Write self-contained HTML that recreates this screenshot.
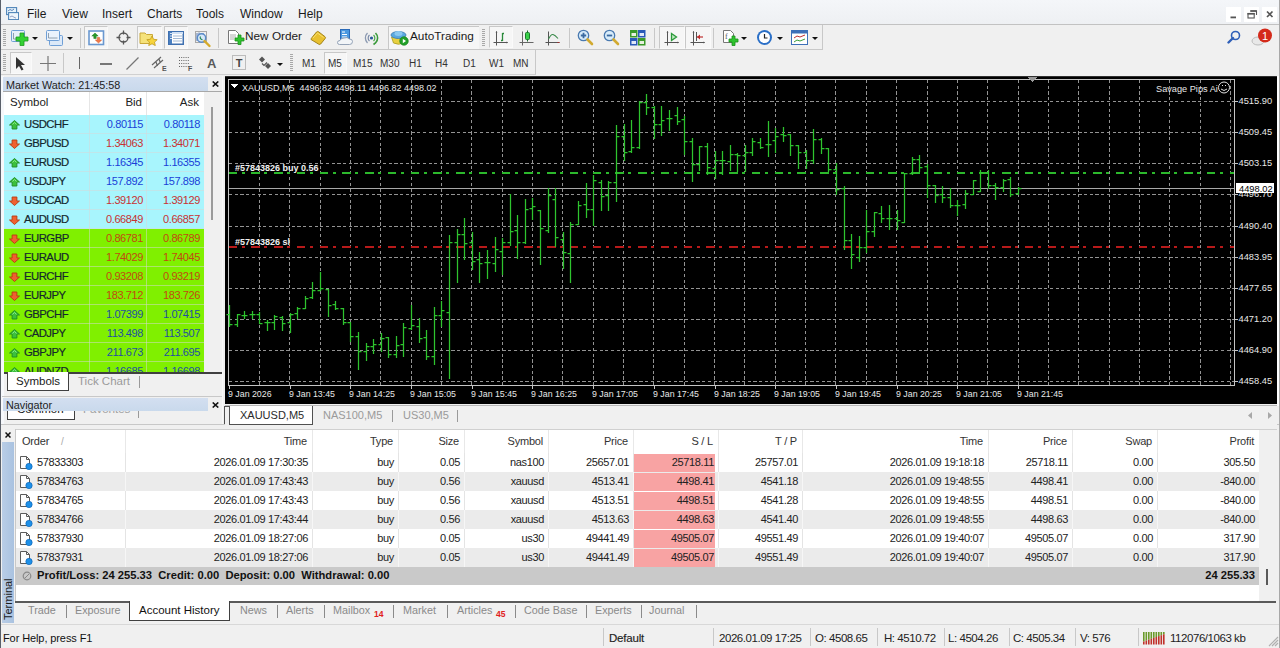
<!DOCTYPE html><html><head><meta charset="utf-8"><style>
*{margin:0;padding:0;box-sizing:border-box}
html,body{width:1280px;height:648px;overflow:hidden;background:#f0f0f0;font-family:"Liberation Sans", sans-serif;font-size:12px;color:#1e1e1e}
.a{position:absolute;white-space:nowrap;line-height:1}
.r{text-align:right}
</style></head><body>
<div class="a" style="left:0px;top:0px;width:1280px;height:24px;background:linear-gradient(#f4f6f9,#eef0f3);"></div><div class="a" style="left:0px;top:23.5px;width:1280px;height:1.2px;background:#c2c2c2;"></div><div class="a" style="left:0px;top:0px;width:1px;height:648px;background:#5a606a;"></div><svg class="a" style="left:6px;top:7px" width="13" height="13" viewBox="0 0 13 13">
<rect x="0.6" y="0.6" width="10" height="7" fill="#e8f4fc" stroke="#4f84b8" stroke-width="1.1"/>
<rect x="2.6" y="5.6" width="10" height="7" fill="#eef6fc" stroke="#4f84b8" stroke-width="1.1"/>
<path d="M2 4 l2 -1.5 l2 1 l2 -1.5" stroke="#3a6aa8" fill="none" stroke-width="0.8"/>
<path d="M4 10 l2 -1 l2 1.2 l2 1" stroke="#7a8ab8" fill="none" stroke-width="0.8"/>
</svg><div class="a" style="left:27px;top:8px;font-size:12px;color:#1a1a1a;">File</div><div class="a" style="left:62px;top:8px;font-size:12px;color:#1a1a1a;">View</div><div class="a" style="left:102px;top:8px;font-size:12px;color:#1a1a1a;">Insert</div><div class="a" style="left:147px;top:8px;font-size:12px;color:#1a1a1a;">Charts</div><div class="a" style="left:196px;top:8px;font-size:12px;color:#1a1a1a;">Tools</div><div class="a" style="left:240px;top:8px;font-size:12px;color:#1a1a1a;">Window</div><div class="a" style="left:298px;top:8px;font-size:12px;color:#1a1a1a;">Help</div><div class="a" style="left:1226px;top:7px;width:15px;height:14.5px;background:#ffffff;"></div><div class="a" style="left:1244px;top:7px;width:15px;height:14.5px;background:#ffffff;"></div><div class="a" style="left:1262px;top:7px;width:15px;height:14.5px;background:#ffffff;"></div><svg class="a" style="left:1226px;top:7px" width="54" height="15" viewBox="0 0 54 15">
<rect x="4.5" y="9.5" width="5.5" height="1.8" fill="#555"/>
<path d="M24.5 4 h6 v4" fill="none" stroke="#555" stroke-width="1.1"/><rect x="24.3" y="3.2" width="6.5" height="1.6" fill="#555"/>
<rect x="22" y="6.5" width="6.2" height="4.5" fill="#fff" stroke="#555" stroke-width="1.1"/><rect x="21.5" y="6" width="7" height="1.6" fill="#555"/>
<path d="M41 4.5 l5.5 5.5 M46.5 4.5 l-5.5 5.5" stroke="#555" stroke-width="1.7"/>
</svg><div class="a" style="left:1px;top:25px;width:1279px;height:24px;background:#f0f0f0;"></div><div class="a" style="left:1px;top:25px;width:822px;height:25px;border-right:1px solid #c8c8c8;border-bottom:1px solid #c8c8c8"></div><div class="a" style="left:1px;top:50px;width:535px;height:25px;border-right:1px solid #c8c8c8;border-bottom:1px solid #d0d0d0"></div><div class="a" style="left:3px;top:29px;width:3px;height:18px;background:repeating-linear-gradient(#a8a8a8 0 1px,transparent 1px 2px)"></div><svg class="a" style="left:10px;top:29px" width="20" height="17" viewBox="0 0 20 17">
<rect x="1.5" y="1.5" width="13" height="11" rx="1" fill="#e6f0fb" stroke="#6f9fd6"/>
<path d="M3.5 4 v6 h9" stroke="#7a8a9a" fill="none" stroke-width="0.8"/>
<path d="M10 4 h4 v4 h4 v4 h-4 v4.5 h-4 v-4.5 h-4 v-4 h4z" fill="#33d133" stroke="#1f9a1f" stroke-width="0.8"/>
</svg><svg class="a" style="left:32px;top:37px" width="6" height="3" viewBox="0 0 6 3"><path d="M0 0h6l-3 3z" fill="#111"/></svg><svg class="a" style="left:46px;top:29px" width="18" height="18" viewBox="0 0 18 18">
<rect x="3.5" y="6.5" width="13" height="10" rx="1" fill="#dce9f8" stroke="#6f9fd6"/>
<rect x="0.5" y="1.5" width="13" height="10" rx="1" fill="#eaf2fc" stroke="#6f9fd6"/>
<path d="M2.5 4 v5 h9" stroke="#7a8a9a" fill="none" stroke-width="0.8"/>
</svg><svg class="a" style="left:67px;top:37px" width="6" height="3" viewBox="0 0 6 3"><path d="M0 0h6l-3 3z" fill="#111"/></svg><div class="a" style="left:80px;top:28px;width:1px;height:20px;background:#c8c8c8;"></div><div class="a" style="left:84px;top:26px;width:24px;height:23px;border-top:1.5px solid #c8c8c8;border-left:1.5px solid #c8c8c8;border-right:1px solid #fafafa;border-bottom:1px solid #fafafa;background:#f6f6f6"></div><svg class="a" style="left:88px;top:30px" width="17" height="16" viewBox="0 0 17 16">
<rect x="1" y="1" width="14.5" height="13.5" fill="#fff" stroke="#6a98d0" stroke-width="1.6"/>
<path d="M7 3 l3.2 3 h-2 v2.5 h-2.4 v-2.5 h-2z" fill="#2a9a2a" stroke="#1f7a1f" stroke-width="0.5"/>
<path d="M10.5 13 l3.2 -3 h-2 v-2.5 h-2.4 v2.5 h-2z" fill="#f07a4a" stroke="#d05a2a" stroke-width="0.5"/>
</svg><svg class="a" style="left:116px;top:30px" width="15" height="15" viewBox="0 0 15 15">
<circle cx="7.5" cy="7.5" r="4.5" fill="none" stroke="#555" stroke-width="1.3"/>
<path d="M7.5 0.5v4M7.5 10.5v4M0.5 7.5h4M10.5 7.5h4" stroke="#555" stroke-width="1.3"/>
</svg><div class="a" style="left:137px;top:26px;width:25px;height:23px;border-top:1.5px solid #c8c8c8;border-left:1.5px solid #c8c8c8;border-right:1px solid #fafafa;border-bottom:1px solid #fafafa;background:#f6f6f6"></div><svg class="a" style="left:139px;top:30px" width="19" height="16" viewBox="0 0 19 16">
<path d="M1 3 h5 l1.5 1.5 h6 v9 h-12.5z" fill="#f5e27a" stroke="#c9a83a"/>
<path d="M13 6 l1.6 3.3 3.6 .4 -2.7 2.4 .8 3.5 -3.3 -1.8 -3.3 1.8 .8 -3.5 -2.7 -2.4 3.6 -.4z" fill="#f7d43b" stroke="#c09a20" stroke-width="0.8"/>
</svg><div class="a" style="left:164px;top:26px;width:24px;height:23px;border-top:1.5px solid #c8c8c8;border-left:1.5px solid #c8c8c8;border-right:1px solid #fafafa;border-bottom:1px solid #fafafa;background:#f6f6f6"></div><svg class="a" style="left:168px;top:31px" width="16" height="14" viewBox="0 0 16 14">
<rect x="0.75" y="0.75" width="14.5" height="12.5" fill="#fff" stroke="#3f70b0" stroke-width="1.5"/>
<rect x="1" y="1" width="3" height="12" fill="#4a7fc0"/>
<rect x="4" y="1" width="11" height="2" fill="#cfe0f4"/>
<path d="M5 5h9M5 7.5h9M5 10h9" stroke="#8aa6c8" stroke-width="0.8"/>
<path d="M2 2.5h2M2 5h2M2 7.5h2" stroke="#fff" stroke-width="0.8"/>
</svg><svg class="a" style="left:194px;top:30px" width="18" height="18" viewBox="0 0 18 18">
<rect x="1.5" y="1.5" width="11" height="11" fill="#f0f0f0" stroke="#a8a8a8"/>
<path d="M3 3v8M5 2.5v4M9 3v5" stroke="#3a5fa0" stroke-width="0.8"/>
<circle cx="7.5" cy="8" r="4.2" fill="#d6e8f8" stroke="#5a8ac8" stroke-width="1.4"/>
<path d="M6.5 6.5 a2 2 0 0 0 2 3" stroke="#2a8a5a" fill="none" stroke-width="1.2"/>
<path d="M10.5 11 l5 5" stroke="#d6aa2a" stroke-width="2.4" stroke-linecap="round"/>
</svg><div class="a" style="left:218px;top:28px;width:1px;height:20px;background:#c8c8c8;"></div><svg class="a" style="left:227px;top:29px" width="18" height="18" viewBox="0 0 18 18">
<path d="M1.5 1.5 h7 l3 3 v10 h-10z" fill="#fff" stroke="#777"/>
<path d="M3 6h6M3 8h6M3 10h4" stroke="#999" stroke-width="0.8"/>
<path d="M8 9 h3 v-3 h3 v3 h3 v3 h-3 v3.5 h-3 v-3.5 h-3z" fill="#2fc32f" stroke="#1a8f1a" stroke-width="0.8"/>
</svg><div class="a" style="left:245px;top:31px;font-size:11.8px;color:#1a1a1a;">New Order</div><svg class="a" style="left:310px;top:30px" width="17" height="16" viewBox="0 0 17 16">
<path d="M1 9.5 q0 -1 1 -2 l4.5 -5.5 q1 -1 2 -0.3 l6.5 5 q1 0.8 0.2 1.8 l-4.5 5.5 q-0.8 0.8 -1.8 0.3 z" fill="#e8c030" stroke="#9a7a10" stroke-width="0.9"/>
<path d="M3 8 l4.5 -5 l6 4.5" fill="none" stroke="#f8e070" stroke-width="1"/>
</svg><svg class="a" style="left:337px;top:29px" width="17" height="17" viewBox="0 0 17 17">
<rect x="3.5" y="0.5" width="9" height="10" fill="#4a98e0" stroke="#2a6ab8"/>
<path d="M5 3h3M5 5.5h5M5 8h5" stroke="#fff" stroke-width="1"/>
<path d="M2.5 15.5 q-2 0 -2 -2 q0 -2 2.5 -2 q1 -3 4.5 -2.5 q2.5 -1.5 5 1 q3 0 3 2.5 q0 3 -3 3 z" fill="#f2f5f8" stroke="#8a9ab0" stroke-width="0.9"/>
</svg><svg class="a" style="left:363px;top:30px" width="17" height="16" viewBox="0 0 17 16">
<path d="M4.5 3 a7 7 0 0 0 0 10" fill="none" stroke="#8a98b0" stroke-width="1.3"/>
<path d="M6.5 5 a4 4 0 0 0 0 6" fill="none" stroke="#7a8aa8" stroke-width="1.2"/>
<path d="M10.5 5 a4 4 0 0 1 0 6" fill="none" stroke="#4aa84a" stroke-width="1.2"/>
<path d="M12.5 3 a7 7 0 0 1 0 10 l-2 1.5" fill="none" stroke="#3a9a3a" stroke-width="1.6"/>
<circle cx="8.5" cy="8" r="1.6" fill="#2a5a9a"/>
</svg><div class="a" style="left:388px;top:26px;width:91px;height:23px;border-top:1.5px solid #c8c8c8;border-left:1.5px solid #c8c8c8;background:#f6f6f6"></div><svg class="a" style="left:390px;top:29px" width="19" height="17" viewBox="0 0 19 17">
<path d="M1.5 8 l2 6 q5 2.5 10 0 l2 -6z" fill="#e8d040" stroke="#a89a20" stroke-width="0.8"/>
<ellipse cx="8.5" cy="6" rx="7.5" ry="3.5" fill="#5aa8e0" stroke="#3a78b0" stroke-width="0.8"/>
<ellipse cx="8.5" cy="4.5" rx="4" ry="2.5" fill="#8ac8f0"/>
<circle cx="14" cy="12" r="4.3" fill="#22a02a" stroke="#10801a" stroke-width="0.6"/>
<path d="M12.8 9.8 l3.2 2.2 l-3.2 2.2z" fill="#fff"/>
</svg><div class="a" style="left:410px;top:31px;font-size:11.8px;color:#1a1a1a;">AutoTrading</div><div class="a" style="left:482px;top:29px;width:3px;height:18px;background:repeating-linear-gradient(#a8a8a8 0 1px,transparent 1px 2px)"></div><div class="a" style="left:489px;top:26px;width:24px;height:22px;border-top:1.5px solid #c8c8c8;border-left:1.5px solid #c8c8c8;border-right:1px solid #fafafa;border-bottom:1px solid #fafafa;background:#f6f6f6"></div><svg class="a" style="left:493px;top:30px" width="16" height="16" viewBox="0 0 16 16">
<path d="M3.5 1.5v14M0.5 12.5h14" stroke="#555" stroke-width="1"/><path d="M2.5 2.5 l1 -1.5 l1 1.5z M13.5 11.5 l1.5 1 l-1.5 1z" fill="#555"/>
<path d="M9.5 3v8M9.5 3.5h1.5M8 10.5h1.5" stroke="#2a8a3a" stroke-width="1.3"/>
</svg><svg class="a" style="left:519px;top:30px" width="16" height="16" viewBox="0 0 16 16">
<path d="M3.5 1.5v14M0.5 12.5h14" stroke="#666" stroke-width="1"/>
<path d="M8.5 0.5v11" stroke="#1a6a2a"/><rect x="6.5" y="2.5" width="4" height="7" rx="1" fill="#3ad04a" stroke="#1a7a2a"/>
</svg><svg class="a" style="left:545px;top:30px" width="16" height="16" viewBox="0 0 16 16">
<path d="M3.5 1.5v14M0.5 12.5h14" stroke="#555" stroke-width="1"/><path d="M12.5 12.5h2" stroke="#a03030"/>
<path d="M3.5 9 q2.5 -5 4.5 -4.5 q2 0.5 5 4" stroke="#3a8a4a" fill="none" stroke-width="1.1"/>
</svg><div class="a" style="left:569px;top:28px;width:1px;height:20px;background:#c8c8c8;"></div><svg class="a" style="left:577px;top:29px" width="17" height="17" viewBox="0 0 17 17">
<circle cx="6.5" cy="6.5" r="5.2" fill="#d8ecfa" stroke="#4a7ab0" stroke-width="1.3"/>
<path d="M3.8 6.5h5.4M6.5 3.8v5.4" stroke="#3a6aa0" stroke-width="1.8"/>
<path d="M10.5 10.5 l4.5 4.5" stroke="#d2aa30" stroke-width="2.6" stroke-linecap="round"/>
</svg><svg class="a" style="left:603px;top:29px" width="17" height="17" viewBox="0 0 17 17">
<circle cx="6.5" cy="6.5" r="5.2" fill="#d8ecfa" stroke="#4a7ab0" stroke-width="1.3"/>
<path d="M3.8 6.5h5.4" stroke="#3a6aa0" stroke-width="1.8"/>
<path d="M10.5 10.5 l4.5 4.5" stroke="#d2aa30" stroke-width="2.6" stroke-linecap="round"/>
</svg><svg class="a" style="left:630px;top:30px" width="16" height="16" viewBox="0 0 16 16">
<rect x="0" y="0" width="7.5" height="7.5" fill="#3a9a2a"/><rect x="8" y="0" width="7.5" height="7.5" fill="#2a5ab8"/>
<rect x="0" y="8" width="7.5" height="7.5" fill="#2a5ab8"/><rect x="8" y="8" width="7.5" height="7.5" fill="#3a9a2a"/>
<rect x="1.5" y="3" width="4.5" height="3" fill="#e8f0e0"/><rect x="9.5" y="3" width="4.5" height="3" fill="#e0e8f8"/>
<rect x="1.5" y="11" width="4.5" height="3" fill="#e0e8f8"/><rect x="9.5" y="11" width="4.5" height="3" fill="#e8f0e0"/>
</svg><div class="a" style="left:654px;top:28px;width:1px;height:20px;background:#c8c8c8;"></div><div class="a" style="left:659px;top:26px;width:26px;height:23px;border-top:1.5px solid #c8c8c8;border-left:1.5px solid #c8c8c8;border-right:1px solid #fafafa;border-bottom:1px solid #fafafa;background:#f6f6f6"></div><div class="a" style="left:685px;top:26px;width:26px;height:23px;border-top:1.5px solid #c8c8c8;border-left:1.5px solid #c8c8c8;border-right:1px solid #fafafa;border-bottom:1px solid #fafafa;background:#f6f6f6"></div><svg class="a" style="left:664px;top:30px" width="16" height="16" viewBox="0 0 16 16">
<path d="M3.5 1.5v14M0.5 12.5h14" stroke="#555" stroke-width="1"/><path d="M2.5 2.5 l1 -1.5 l1 1.5z M13.5 11.5 l1.5 1 l-1.5 1z" fill="#555"/>
<path d="M7.5 3.5 l5 3.5 l-5 3.5z" fill="#bfe8bf" stroke="#2a9a3a" stroke-width="1.3"/>
</svg><svg class="a" style="left:690px;top:30px" width="16" height="16" viewBox="0 0 16 16">
<path d="M3.5 1.5v14M0.5 12.5h14" stroke="#555" stroke-width="1"/><path d="M2.5 2.5 l1 -1.5 l1 1.5z M13.5 11.5 l1.5 1 l-1.5 1z" fill="#555"/>
<path d="M6.5 2v9" stroke="#555"/><path d="M7 7h6" stroke="#c03030" stroke-width="1.2"/><path d="M7 7 l3 -2.5 v5z" fill="#c03030"/>
</svg><div class="a" style="left:713px;top:28px;width:1px;height:20px;background:#c8c8c8;"></div><svg class="a" style="left:722px;top:29px" width="17" height="18" viewBox="0 0 17 18">
<path d="M1.5 1.5 h7 l3 3 v9 h-10z" fill="#fff" stroke="#777"/>
<text x="3" y="10" font-size="8" fill="#555" font-family="Liberation Serif">f</text>
<path d="M7 10 h3 v-3 h3 v3 h3 v3 h-3 v3.5 h-3 v-3.5 h-3z" fill="#2fc32f" stroke="#1a8f1a" stroke-width="0.8"/>
</svg><svg class="a" style="left:741px;top:37px" width="6" height="3" viewBox="0 0 6 3"><path d="M0 0h6l-3 3z" fill="#111"/></svg><svg class="a" style="left:756px;top:29px" width="17" height="17" viewBox="0 0 17 17">
<circle cx="8.5" cy="8.5" r="7.5" fill="#2a6fc7"/><circle cx="8.5" cy="8.5" r="5.5" fill="#fff"/>
<path d="M8.5 5v4h3" stroke="#222" fill="none" stroke-width="1.2"/>
</svg><svg class="a" style="left:777px;top:37px" width="6" height="3" viewBox="0 0 6 3"><path d="M0 0h6l-3 3z" fill="#111"/></svg><svg class="a" style="left:791px;top:30px" width="17" height="15" viewBox="0 0 17 15">
<rect x="0.5" y="0.5" width="16" height="14" fill="#fff" stroke="#3d70b8"/>
<rect x="0.5" y="0.5" width="16" height="3" fill="#3d70b8"/>
<path d="M3 8 l3 -2 l3 1 l5 -2" stroke="#c03030" fill="none"/><path d="M3 12 l3 -2 l3 1 l5 -2" stroke="#3aa03a" fill="none"/>
</svg><svg class="a" style="left:812px;top:37px" width="6" height="3" viewBox="0 0 6 3"><path d="M0 0h6l-3 3z" fill="#111"/></svg><svg class="a" style="left:1227px;top:30px" width="14" height="14" viewBox="0 0 14 14">
<circle cx="8.5" cy="5.5" r="4" fill="none" stroke="#2f5fb8" stroke-width="1.6"/>
<path d="M6 8 l-4.5 4.5" stroke="#2f5fb8" stroke-width="2.4" stroke-linecap="round"/>
</svg><svg class="a" style="left:1250px;top:27px" width="26" height="22" viewBox="0 0 26 22">
<ellipse cx="8" cy="14" rx="6" ry="4" fill="#e8e8e8" stroke="#bbb"/>
<circle cx="15" cy="8.5" r="7" fill="#d42a1a"/>
<text x="15" y="12.5" font-size="11" fill="#fff" text-anchor="middle" font-family="Liberation Sans">1</text>
</svg><div class="a" style="left:3px;top:54px;width:3px;height:18px;background:repeating-linear-gradient(#a8a8a8 0 1px,transparent 1px 2px)"></div><div class="a" style="left:10px;top:52px;width:22px;height:22px;border-top:1.5px solid #c8c8c8;border-left:1.5px solid #c8c8c8;border-right:1px solid #fafafa;border-bottom:1px solid #fafafa;background:#f6f6f6"></div><svg class="a" style="left:15px;top:56px" width="12" height="15" viewBox="0 0 12 15">
<path d="M1 1 v12 l3 -3 l2.5 4.5 l2 -1 l-2.5 -4.5 h4z" fill="#333"/>
</svg><svg class="a" style="left:40px;top:56px" width="16" height="15" viewBox="0 0 16 15">
<path d="M8 0v15M0 7.5h16" stroke="#777" stroke-width="1.2"/>
</svg><div class="a" style="left:63px;top:53px;width:1px;height:20px;background:#c8c8c8;"></div><div class="a" style="left:79px;top:57px;width:1px;height:12px;background:#666;"></div><div class="a" style="left:100px;top:63px;width:12px;height:1.5px;background:#777;"></div><svg class="a" style="left:126px;top:57px" width="13" height="13" viewBox="0 0 13 13"><path d="M0.5 12.5 l12 -12" stroke="#777" stroke-width="1.3"/></svg><svg class="a" style="left:151px;top:55px" width="18" height="17" viewBox="0 0 18 17">
<path d="M1 10 l9 -8 M3 13 l9 -8 M5 7 l1.5 4 M8 4 l1.5 4" stroke="#666" stroke-width="1.2" fill="none"/>
<text x="11" y="16" font-size="7" fill="#555" font-family="Liberation Sans" font-weight="bold">E</text>
</svg><svg class="a" style="left:178px;top:55px" width="16" height="17" viewBox="0 0 16 17">
<path d="M1 2.5h11M1 5.5h11M1 8.5h11M1 11.5h11" stroke="#666" stroke-width="1" stroke-dasharray="1 1.2"/>
<text x="10" y="16" font-size="7" fill="#555" font-family="Liberation Sans" font-weight="bold">F</text>
</svg><div class="a" style="left:207px;top:57px;font-size:13px;color:#5a5a5a;font-weight:bold">A</div><svg class="a" style="left:232px;top:55px" width="14" height="15" viewBox="0 0 14 15">
<rect x="0.5" y="0.5" width="13" height="14" fill="none" stroke="#888" stroke-dasharray="1 1"/>
<text x="7" y="12" font-size="11" fill="#444" text-anchor="middle" font-family="Liberation Sans" font-weight="bold">T</text>
</svg><svg class="a" style="left:258px;top:56px" width="14" height="14" viewBox="0 0 14 14">
<path d="M1 3.5 l3 -3 l3 3 l-3 3z" fill="#555"/><path d="M7 10 l3 -3 l3 3 l-3 3z" fill="#555"/>
<path d="M4 7.5 l2 2 l3 -3" stroke="#555" stroke-width="1.2" fill="none"/>
</svg><svg class="a" style="left:277px;top:63px" width="6" height="3" viewBox="0 0 6 3"><path d="M0 0h6l-3 3z" fill="#111"/></svg><div class="a" style="left:290px;top:54px;width:3px;height:18px;background:repeating-linear-gradient(#a8a8a8 0 1px,transparent 1px 2px)"></div><div class="a" style="left:302px;top:59px;font-size:10px;color:#333;">M1</div><div class="a" style="left:324px;top:52px;width:23px;height:22px;border-top:1.5px solid #c8c8c8;border-left:1.5px solid #c8c8c8;border-right:1px solid #fafafa;border-bottom:1px solid #fafafa;background:#f6f6f6"></div><div class="a" style="left:328px;top:59px;font-size:10px;color:#333;">M5</div><div class="a" style="left:353px;top:59px;font-size:10px;color:#333;">M15</div><div class="a" style="left:380px;top:59px;font-size:10px;color:#333;">M30</div><div class="a" style="left:409px;top:59px;font-size:10px;color:#333;">H1</div><div class="a" style="left:435px;top:59px;font-size:10px;color:#333;">H4</div><div class="a" style="left:463px;top:59px;font-size:10px;color:#333;">D1</div><div class="a" style="left:489px;top:59px;font-size:10px;color:#333;">W1</div><div class="a" style="left:513px;top:59px;font-size:10px;color:#333;">MN</div><div class="a" style="left:1px;top:76px;width:223px;height:323px;background:#f0f0f0;"></div><div class="a" style="left:1px;top:76px;width:3px;height:349px;background:#f6f8fb;"></div><div class="a" style="left:3px;top:77px;width:205px;height:14px;background:linear-gradient(#d3dff0,#c9d9ec);"></div><div class="a" style="left:6px;top:79.5px;font-size:10.8px;color:#222;">Market Watch: 21:45:58</div><svg class="a" style="left:211.5px;top:80.5px" width="7" height="6" viewBox="0 0 7 6"><path d="M0.7 0.5l5.6 5M6.3 0.5l-5.6 5" stroke="#111" stroke-width="1.6"/></svg><div class="a" style="left:3px;top:91px;width:219px;height:1px;background:#a8a8a8;"></div><div class="a" style="left:4px;top:92px;width:200px;height:281px;background:#ffffff;"></div><div class="a" style="left:10px;top:97px;font-size:11.5px;color:#222;">Symbol</div><div class="a r" style="left:90px;top:97px;width:52px;font-size:11.5px;color:#222">Bid</div><div class="a r" style="left:147px;top:97px;width:52px;font-size:11.5px;color:#222">Ask</div><div class="a" style="left:89px;top:92px;width:1px;height:23px;background:#e6e6e6;"></div><div class="a" style="left:146px;top:92px;width:1px;height:23px;background:#e6e6e6;"></div><div class="a" style="left:4px;top:115px;width:200px;height:257px;overflow:hidden"><div class="a" style="left:0;top:0px;width:200px;height:19px;background:#a8f5fd"></div><div class="a" style="left:0;top:18px;width:200px;height:1px;background:rgba(216,216,216,0.5)"></div><div class="a" style="left:85px;top:0px;width:1px;height:19px;background:rgba(216,216,216,0.5)"></div><div class="a" style="left:142px;top:0px;width:1px;height:19px;background:rgba(216,216,216,0.5)"></div><svg class="a" style="left:4.5px;top:5px" width="11" height="10" viewBox="0 0 11 10"><path d="M5.5 0.5 l5 4.5 h-2.6 v4 h-4.8 v-4 h-2.6z" fill="#3cc03c" stroke="#1f8a22" stroke-width="0.9" stroke-linejoin="round"/><path d="M3.5 4.5 l2 -2 l2 2" stroke="#9af09a" fill="none" stroke-width="0.8"/></svg><div class="a" style="left:20px;top:4px;font-size:11.3px;letter-spacing:-0.5px;color:#14282e;-webkit-text-stroke:0.2px #14282e">USDCHF</div><div class="a r" style="left:86px;top:4px;width:53px;font-size:11px;letter-spacing:-0.4px;color:#1a3fd8">0.80115</div><div class="a r" style="left:143px;top:4px;width:53px;font-size:11px;letter-spacing:-0.4px;color:#1a3fd8">0.80118</div><div class="a" style="left:0;top:19px;width:200px;height:19px;background:#a8f5fd"></div><div class="a" style="left:0;top:37px;width:200px;height:1px;background:rgba(216,216,216,0.5)"></div><div class="a" style="left:85px;top:19px;width:1px;height:19px;background:rgba(216,216,216,0.5)"></div><div class="a" style="left:142px;top:19px;width:1px;height:19px;background:rgba(216,216,216,0.5)"></div><svg class="a" style="left:4.5px;top:24px" width="11" height="10" viewBox="0 0 11 10"><path d="M5.5 9.5 l5 -4.5 h-2.6 v-4 h-4.8 v4 h-2.6z" fill="#f06030" stroke="#b83a10" stroke-width="0.9" stroke-linejoin="round"/></svg><div class="a" style="left:20px;top:23px;font-size:11.3px;letter-spacing:-0.5px;color:#14282e;-webkit-text-stroke:0.2px #14282e">GBPUSD</div><div class="a r" style="left:86px;top:23px;width:53px;font-size:11px;letter-spacing:-0.4px;color:#c83232">1.34063</div><div class="a r" style="left:143px;top:23px;width:53px;font-size:11px;letter-spacing:-0.4px;color:#c83232">1.34071</div><div class="a" style="left:0;top:38px;width:200px;height:19px;background:#a8f5fd"></div><div class="a" style="left:0;top:56px;width:200px;height:1px;background:rgba(216,216,216,0.5)"></div><div class="a" style="left:85px;top:38px;width:1px;height:19px;background:rgba(216,216,216,0.5)"></div><div class="a" style="left:142px;top:38px;width:1px;height:19px;background:rgba(216,216,216,0.5)"></div><svg class="a" style="left:4.5px;top:43px" width="11" height="10" viewBox="0 0 11 10"><path d="M5.5 0.5 l5 4.5 h-2.6 v4 h-4.8 v-4 h-2.6z" fill="#3cc03c" stroke="#1f8a22" stroke-width="0.9" stroke-linejoin="round"/><path d="M3.5 4.5 l2 -2 l2 2" stroke="#9af09a" fill="none" stroke-width="0.8"/></svg><div class="a" style="left:20px;top:42px;font-size:11.3px;letter-spacing:-0.5px;color:#14282e;-webkit-text-stroke:0.2px #14282e">EURUSD</div><div class="a r" style="left:86px;top:42px;width:53px;font-size:11px;letter-spacing:-0.4px;color:#1a3fd8">1.16345</div><div class="a r" style="left:143px;top:42px;width:53px;font-size:11px;letter-spacing:-0.4px;color:#1a3fd8">1.16355</div><div class="a" style="left:0;top:57px;width:200px;height:19px;background:#a8f5fd"></div><div class="a" style="left:0;top:75px;width:200px;height:1px;background:rgba(216,216,216,0.5)"></div><div class="a" style="left:85px;top:57px;width:1px;height:19px;background:rgba(216,216,216,0.5)"></div><div class="a" style="left:142px;top:57px;width:1px;height:19px;background:rgba(216,216,216,0.5)"></div><svg class="a" style="left:4.5px;top:62px" width="11" height="10" viewBox="0 0 11 10"><path d="M5.5 0.5 l5 4.5 h-2.6 v4 h-4.8 v-4 h-2.6z" fill="#3cc03c" stroke="#1f8a22" stroke-width="0.9" stroke-linejoin="round"/><path d="M3.5 4.5 l2 -2 l2 2" stroke="#9af09a" fill="none" stroke-width="0.8"/></svg><div class="a" style="left:20px;top:61px;font-size:11.3px;letter-spacing:-0.5px;color:#14282e;-webkit-text-stroke:0.2px #14282e">USDJPY</div><div class="a r" style="left:86px;top:61px;width:53px;font-size:11px;letter-spacing:-0.4px;color:#1a3fd8">157.892</div><div class="a r" style="left:143px;top:61px;width:53px;font-size:11px;letter-spacing:-0.4px;color:#1a3fd8">157.898</div><div class="a" style="left:0;top:76px;width:200px;height:19px;background:#a8f5fd"></div><div class="a" style="left:0;top:94px;width:200px;height:1px;background:rgba(216,216,216,0.5)"></div><div class="a" style="left:85px;top:76px;width:1px;height:19px;background:rgba(216,216,216,0.5)"></div><div class="a" style="left:142px;top:76px;width:1px;height:19px;background:rgba(216,216,216,0.5)"></div><svg class="a" style="left:4.5px;top:81px" width="11" height="10" viewBox="0 0 11 10"><path d="M5.5 9.5 l5 -4.5 h-2.6 v-4 h-4.8 v4 h-2.6z" fill="#f06030" stroke="#b83a10" stroke-width="0.9" stroke-linejoin="round"/></svg><div class="a" style="left:20px;top:80px;font-size:11.3px;letter-spacing:-0.5px;color:#14282e;-webkit-text-stroke:0.2px #14282e">USDCAD</div><div class="a r" style="left:86px;top:80px;width:53px;font-size:11px;letter-spacing:-0.4px;color:#c83232">1.39120</div><div class="a r" style="left:143px;top:80px;width:53px;font-size:11px;letter-spacing:-0.4px;color:#c83232">1.39129</div><div class="a" style="left:0;top:95px;width:200px;height:19px;background:#a8f5fd"></div><div class="a" style="left:0;top:113px;width:200px;height:1px;background:rgba(216,216,216,0.5)"></div><div class="a" style="left:85px;top:95px;width:1px;height:19px;background:rgba(216,216,216,0.5)"></div><div class="a" style="left:142px;top:95px;width:1px;height:19px;background:rgba(216,216,216,0.5)"></div><svg class="a" style="left:4.5px;top:100px" width="11" height="10" viewBox="0 0 11 10"><path d="M5.5 9.5 l5 -4.5 h-2.6 v-4 h-4.8 v4 h-2.6z" fill="#f06030" stroke="#b83a10" stroke-width="0.9" stroke-linejoin="round"/></svg><div class="a" style="left:20px;top:99px;font-size:11.3px;letter-spacing:-0.5px;color:#14282e;-webkit-text-stroke:0.2px #14282e">AUDUSD</div><div class="a r" style="left:86px;top:99px;width:53px;font-size:11px;letter-spacing:-0.4px;color:#c83232">0.66849</div><div class="a r" style="left:143px;top:99px;width:53px;font-size:11px;letter-spacing:-0.4px;color:#c83232">0.66857</div><div class="a" style="left:0;top:114px;width:200px;height:19px;background:#80f000"></div><div class="a" style="left:0;top:132px;width:200px;height:1px;background:rgba(216,216,216,0.5)"></div><div class="a" style="left:85px;top:114px;width:1px;height:19px;background:rgba(216,216,216,0.5)"></div><div class="a" style="left:142px;top:114px;width:1px;height:19px;background:rgba(216,216,216,0.5)"></div><svg class="a" style="left:4.5px;top:119px" width="11" height="10" viewBox="0 0 11 10"><path d="M5.5 9.5 l5 -4.5 h-2.6 v-4 h-4.8 v4 h-2.6z" fill="#f06030" stroke="#b83a10" stroke-width="0.9" stroke-linejoin="round"/></svg><div class="a" style="left:20px;top:118px;font-size:11.3px;letter-spacing:-0.5px;color:#14282e;-webkit-text-stroke:0.2px #14282e">EURGBP</div><div class="a r" style="left:86px;top:118px;width:53px;font-size:11px;letter-spacing:-0.4px;color:#c04a10">0.86781</div><div class="a r" style="left:143px;top:118px;width:53px;font-size:11px;letter-spacing:-0.4px;color:#c04a10">0.86789</div><div class="a" style="left:0;top:133px;width:200px;height:19px;background:#80f000"></div><div class="a" style="left:0;top:151px;width:200px;height:1px;background:rgba(216,216,216,0.5)"></div><div class="a" style="left:85px;top:133px;width:1px;height:19px;background:rgba(216,216,216,0.5)"></div><div class="a" style="left:142px;top:133px;width:1px;height:19px;background:rgba(216,216,216,0.5)"></div><svg class="a" style="left:4.5px;top:138px" width="11" height="10" viewBox="0 0 11 10"><path d="M5.5 9.5 l5 -4.5 h-2.6 v-4 h-4.8 v4 h-2.6z" fill="#f06030" stroke="#b83a10" stroke-width="0.9" stroke-linejoin="round"/></svg><div class="a" style="left:20px;top:137px;font-size:11.3px;letter-spacing:-0.5px;color:#14282e;-webkit-text-stroke:0.2px #14282e">EURAUD</div><div class="a r" style="left:86px;top:137px;width:53px;font-size:11px;letter-spacing:-0.4px;color:#c04a10">1.74029</div><div class="a r" style="left:143px;top:137px;width:53px;font-size:11px;letter-spacing:-0.4px;color:#c04a10">1.74045</div><div class="a" style="left:0;top:152px;width:200px;height:19px;background:#80f000"></div><div class="a" style="left:0;top:170px;width:200px;height:1px;background:rgba(216,216,216,0.5)"></div><div class="a" style="left:85px;top:152px;width:1px;height:19px;background:rgba(216,216,216,0.5)"></div><div class="a" style="left:142px;top:152px;width:1px;height:19px;background:rgba(216,216,216,0.5)"></div><svg class="a" style="left:4.5px;top:157px" width="11" height="10" viewBox="0 0 11 10"><path d="M5.5 9.5 l5 -4.5 h-2.6 v-4 h-4.8 v4 h-2.6z" fill="#f06030" stroke="#b83a10" stroke-width="0.9" stroke-linejoin="round"/></svg><div class="a" style="left:20px;top:156px;font-size:11.3px;letter-spacing:-0.5px;color:#14282e;-webkit-text-stroke:0.2px #14282e">EURCHF</div><div class="a r" style="left:86px;top:156px;width:53px;font-size:11px;letter-spacing:-0.4px;color:#c04a10">0.93208</div><div class="a r" style="left:143px;top:156px;width:53px;font-size:11px;letter-spacing:-0.4px;color:#c04a10">0.93219</div><div class="a" style="left:0;top:171px;width:200px;height:19px;background:#80f000"></div><div class="a" style="left:0;top:189px;width:200px;height:1px;background:rgba(216,216,216,0.5)"></div><div class="a" style="left:85px;top:171px;width:1px;height:19px;background:rgba(216,216,216,0.5)"></div><div class="a" style="left:142px;top:171px;width:1px;height:19px;background:rgba(216,216,216,0.5)"></div><svg class="a" style="left:4.5px;top:176px" width="11" height="10" viewBox="0 0 11 10"><path d="M5.5 9.5 l5 -4.5 h-2.6 v-4 h-4.8 v4 h-2.6z" fill="#f06030" stroke="#b83a10" stroke-width="0.9" stroke-linejoin="round"/></svg><div class="a" style="left:20px;top:175px;font-size:11.3px;letter-spacing:-0.5px;color:#14282e;-webkit-text-stroke:0.2px #14282e">EURJPY</div><div class="a r" style="left:86px;top:175px;width:53px;font-size:11px;letter-spacing:-0.4px;color:#c04a10">183.712</div><div class="a r" style="left:143px;top:175px;width:53px;font-size:11px;letter-spacing:-0.4px;color:#c04a10">183.726</div><div class="a" style="left:0;top:190px;width:200px;height:19px;background:#80f000"></div><div class="a" style="left:0;top:208px;width:200px;height:1px;background:rgba(216,216,216,0.5)"></div><div class="a" style="left:85px;top:190px;width:1px;height:19px;background:rgba(216,216,216,0.5)"></div><div class="a" style="left:142px;top:190px;width:1px;height:19px;background:rgba(216,216,216,0.5)"></div><svg class="a" style="left:4.5px;top:195px" width="11" height="10" viewBox="0 0 11 10"><path d="M5.5 0.5 l5 4.5 h-2.6 v4 h-4.8 v-4 h-2.6z" fill="#3cc03c" stroke="#1f8a22" stroke-width="0.9" stroke-linejoin="round"/><path d="M3.5 4.5 l2 -2 l2 2" stroke="#9af09a" fill="none" stroke-width="0.8"/></svg><div class="a" style="left:20px;top:194px;font-size:11.3px;letter-spacing:-0.5px;color:#14282e;-webkit-text-stroke:0.2px #14282e">GBPCHF</div><div class="a r" style="left:86px;top:194px;width:53px;font-size:11px;letter-spacing:-0.4px;color:#1f4fa0">1.07399</div><div class="a r" style="left:143px;top:194px;width:53px;font-size:11px;letter-spacing:-0.4px;color:#1f4fa0">1.07415</div><div class="a" style="left:0;top:209px;width:200px;height:19px;background:#80f000"></div><div class="a" style="left:0;top:227px;width:200px;height:1px;background:rgba(216,216,216,0.5)"></div><div class="a" style="left:85px;top:209px;width:1px;height:19px;background:rgba(216,216,216,0.5)"></div><div class="a" style="left:142px;top:209px;width:1px;height:19px;background:rgba(216,216,216,0.5)"></div><svg class="a" style="left:4.5px;top:214px" width="11" height="10" viewBox="0 0 11 10"><path d="M5.5 0.5 l5 4.5 h-2.6 v4 h-4.8 v-4 h-2.6z" fill="#3cc03c" stroke="#1f8a22" stroke-width="0.9" stroke-linejoin="round"/><path d="M3.5 4.5 l2 -2 l2 2" stroke="#9af09a" fill="none" stroke-width="0.8"/></svg><div class="a" style="left:20px;top:213px;font-size:11.3px;letter-spacing:-0.5px;color:#14282e;-webkit-text-stroke:0.2px #14282e">CADJPY</div><div class="a r" style="left:86px;top:213px;width:53px;font-size:11px;letter-spacing:-0.4px;color:#1f4fa0">113.498</div><div class="a r" style="left:143px;top:213px;width:53px;font-size:11px;letter-spacing:-0.4px;color:#1f4fa0">113.507</div><div class="a" style="left:0;top:228px;width:200px;height:19px;background:#80f000"></div><div class="a" style="left:0;top:246px;width:200px;height:1px;background:rgba(216,216,216,0.5)"></div><div class="a" style="left:85px;top:228px;width:1px;height:19px;background:rgba(216,216,216,0.5)"></div><div class="a" style="left:142px;top:228px;width:1px;height:19px;background:rgba(216,216,216,0.5)"></div><svg class="a" style="left:4.5px;top:233px" width="11" height="10" viewBox="0 0 11 10"><path d="M5.5 0.5 l5 4.5 h-2.6 v4 h-4.8 v-4 h-2.6z" fill="#3cc03c" stroke="#1f8a22" stroke-width="0.9" stroke-linejoin="round"/><path d="M3.5 4.5 l2 -2 l2 2" stroke="#9af09a" fill="none" stroke-width="0.8"/></svg><div class="a" style="left:20px;top:232px;font-size:11.3px;letter-spacing:-0.5px;color:#14282e;-webkit-text-stroke:0.2px #14282e">GBPJPY</div><div class="a r" style="left:86px;top:232px;width:53px;font-size:11px;letter-spacing:-0.4px;color:#1f4fa0">211.673</div><div class="a r" style="left:143px;top:232px;width:53px;font-size:11px;letter-spacing:-0.4px;color:#1f4fa0">211.695</div><div class="a" style="left:0;top:247px;width:200px;height:19px;background:#80f000"></div><div class="a" style="left:0;top:265px;width:200px;height:1px;background:rgba(216,216,216,0.5)"></div><div class="a" style="left:85px;top:247px;width:1px;height:19px;background:rgba(216,216,216,0.5)"></div><div class="a" style="left:142px;top:247px;width:1px;height:19px;background:rgba(216,216,216,0.5)"></div><svg class="a" style="left:4.5px;top:252px" width="11" height="10" viewBox="0 0 11 10"><path d="M5.5 0.5 l5 4.5 h-2.6 v4 h-4.8 v-4 h-2.6z" fill="#3cc03c" stroke="#1f8a22" stroke-width="0.9" stroke-linejoin="round"/><path d="M3.5 4.5 l2 -2 l2 2" stroke="#9af09a" fill="none" stroke-width="0.8"/></svg><div class="a" style="left:20px;top:251px;font-size:11.3px;letter-spacing:-0.5px;color:#14282e;-webkit-text-stroke:0.2px #14282e">AUDNZD</div><div class="a r" style="left:86px;top:251px;width:53px;font-size:11px;letter-spacing:-0.4px;color:#1f4fa0">1.16685</div><div class="a r" style="left:143px;top:251px;width:53px;font-size:11px;letter-spacing:-0.4px;color:#1f4fa0">1.16698</div></div><div class="a" style="left:211px;top:107px;width:2px;height:113px;background:#9a9a9a;"></div><div class="a" style="left:4px;top:372px;width:218px;height:1.5px;background:#404040;"></div><div class="a" style="left:7px;top:372px;width:62px;height:19px;background:#fff;border:1px solid #404040;border-top:none"></div><div class="a" style="left:16px;top:376px;font-size:11.5px;color:#1a1a1a;">Symbols</div><div class="a" style="left:78px;top:376px;font-size:11.5px;color:#9a9a9a;">Tick Chart</div><div class="a" style="left:139px;top:376px;width:1px;height:12px;background:#9a9a9a;"></div><div class="a" style="left:2px;top:396px;width:221px;height:1px;background:#c8c8c8;"></div><div class="a" style="left:7px;top:400px;width:68px;height:20px;background:#fff;border:1.5px solid #404040;border-top:none"></div><div class="a" style="left:17px;top:404px;font-size:11.5px;color:#111;">Common</div><div class="a" style="left:83px;top:404px;font-size:11.5px;color:#a0a0a0;">Favorites</div><div class="a" style="left:138px;top:408px;width:1px;height:10px;background:#9a9a9a;"></div><div class="a" style="left:3px;top:398px;width:205px;height:13px;background:linear-gradient(#d3dff0,#c9d9ec);"></div><div class="a" style="left:6px;top:399.5px;font-size:10.8px;color:#222;">Navigator</div><svg class="a" style="left:211.5px;top:401.5px" width="7" height="6" viewBox="0 0 7 6"><path d="M0.7 0.5l5.6 5M6.3 0.5l-5.6 5" stroke="#111" stroke-width="1.6"/></svg><div class="a" style="left:222px;top:76px;width:1px;height:349px;background:#f8f8f8;"></div><div class="a" style="left:1px;top:424px;width:1279px;height:1px;background:#c8c8c8;"></div><svg class="a" style="left:225px;top:76px" width="1052" height="328" viewBox="225 76 1052 328" shape-rendering="crispEdges"><rect x="225" y="76" width="1052" height="328" fill="#000"/><line x1="259.5" y1="80" x2="259.5" y2="385" stroke="#939393" stroke-width="1" stroke-dasharray="3.2 2.5"/><line x1="289.5" y1="80" x2="289.5" y2="385" stroke="#939393" stroke-width="1" stroke-dasharray="3.2 2.5"/><line x1="320.5" y1="80" x2="320.5" y2="385" stroke="#939393" stroke-width="1" stroke-dasharray="3.2 2.5"/><line x1="350.5" y1="80" x2="350.5" y2="385" stroke="#939393" stroke-width="1" stroke-dasharray="3.2 2.5"/><line x1="380.5" y1="80" x2="380.5" y2="385" stroke="#939393" stroke-width="1" stroke-dasharray="3.2 2.5"/><line x1="411.5" y1="80" x2="411.5" y2="385" stroke="#939393" stroke-width="1" stroke-dasharray="3.2 2.5"/><line x1="441.5" y1="80" x2="441.5" y2="385" stroke="#939393" stroke-width="1" stroke-dasharray="3.2 2.5"/><line x1="471.5" y1="80" x2="471.5" y2="385" stroke="#939393" stroke-width="1" stroke-dasharray="3.2 2.5"/><line x1="502.5" y1="80" x2="502.5" y2="385" stroke="#939393" stroke-width="1" stroke-dasharray="3.2 2.5"/><line x1="532.5" y1="80" x2="532.5" y2="385" stroke="#939393" stroke-width="1" stroke-dasharray="3.2 2.5"/><line x1="562.5" y1="80" x2="562.5" y2="385" stroke="#939393" stroke-width="1" stroke-dasharray="3.2 2.5"/><line x1="593.5" y1="80" x2="593.5" y2="385" stroke="#939393" stroke-width="1" stroke-dasharray="3.2 2.5"/><line x1="623.5" y1="80" x2="623.5" y2="385" stroke="#939393" stroke-width="1" stroke-dasharray="3.2 2.5"/><line x1="653.5" y1="80" x2="653.5" y2="385" stroke="#939393" stroke-width="1" stroke-dasharray="3.2 2.5"/><line x1="684.5" y1="80" x2="684.5" y2="385" stroke="#939393" stroke-width="1" stroke-dasharray="3.2 2.5"/><line x1="714.5" y1="80" x2="714.5" y2="385" stroke="#939393" stroke-width="1" stroke-dasharray="3.2 2.5"/><line x1="744.5" y1="80" x2="744.5" y2="385" stroke="#939393" stroke-width="1" stroke-dasharray="3.2 2.5"/><line x1="775.5" y1="80" x2="775.5" y2="385" stroke="#939393" stroke-width="1" stroke-dasharray="3.2 2.5"/><line x1="805.5" y1="80" x2="805.5" y2="385" stroke="#939393" stroke-width="1" stroke-dasharray="3.2 2.5"/><line x1="835.5" y1="80" x2="835.5" y2="385" stroke="#939393" stroke-width="1" stroke-dasharray="3.2 2.5"/><line x1="866.5" y1="80" x2="866.5" y2="385" stroke="#939393" stroke-width="1" stroke-dasharray="3.2 2.5"/><line x1="896.5" y1="80" x2="896.5" y2="385" stroke="#939393" stroke-width="1" stroke-dasharray="3.2 2.5"/><line x1="927.5" y1="80" x2="927.5" y2="385" stroke="#939393" stroke-width="1" stroke-dasharray="3.2 2.5"/><line x1="957.5" y1="80" x2="957.5" y2="385" stroke="#939393" stroke-width="1" stroke-dasharray="3.2 2.5"/><line x1="987.5" y1="80" x2="987.5" y2="385" stroke="#939393" stroke-width="1" stroke-dasharray="3.2 2.5"/><line x1="1018.5" y1="80" x2="1018.5" y2="385" stroke="#939393" stroke-width="1" stroke-dasharray="3.2 2.5"/><line x1="1048.5" y1="80" x2="1048.5" y2="385" stroke="#939393" stroke-width="1" stroke-dasharray="3.2 2.5"/><line x1="1078.5" y1="80" x2="1078.5" y2="385" stroke="#939393" stroke-width="1" stroke-dasharray="3.2 2.5"/><line x1="1109.5" y1="80" x2="1109.5" y2="385" stroke="#939393" stroke-width="1" stroke-dasharray="3.2 2.5"/><line x1="1139.5" y1="80" x2="1139.5" y2="385" stroke="#939393" stroke-width="1" stroke-dasharray="3.2 2.5"/><line x1="1169.5" y1="80" x2="1169.5" y2="385" stroke="#939393" stroke-width="1" stroke-dasharray="3.2 2.5"/><line x1="1200.5" y1="80" x2="1200.5" y2="385" stroke="#939393" stroke-width="1" stroke-dasharray="3.2 2.5"/><line x1="1230.5" y1="80" x2="1230.5" y2="385" stroke="#939393" stroke-width="1" stroke-dasharray="3.2 2.5"/><line x1="229" y1="101.5" x2="1234" y2="101.5" stroke="#939393" stroke-width="1" stroke-dasharray="3.2 2.5"/><line x1="229" y1="132.5" x2="1234" y2="132.5" stroke="#939393" stroke-width="1" stroke-dasharray="3.2 2.5"/><line x1="229" y1="163.5" x2="1234" y2="163.5" stroke="#939393" stroke-width="1" stroke-dasharray="3.2 2.5"/><line x1="229" y1="194.5" x2="1234" y2="194.5" stroke="#939393" stroke-width="1" stroke-dasharray="3.2 2.5"/><line x1="229" y1="226.5" x2="1234" y2="226.5" stroke="#939393" stroke-width="1" stroke-dasharray="3.2 2.5"/><line x1="229" y1="257.5" x2="1234" y2="257.5" stroke="#939393" stroke-width="1" stroke-dasharray="3.2 2.5"/><line x1="229" y1="288.5" x2="1234" y2="288.5" stroke="#939393" stroke-width="1" stroke-dasharray="3.2 2.5"/><line x1="229" y1="319.5" x2="1234" y2="319.5" stroke="#939393" stroke-width="1" stroke-dasharray="3.2 2.5"/><line x1="229" y1="350.5" x2="1234" y2="350.5" stroke="#939393" stroke-width="1" stroke-dasharray="3.2 2.5"/><line x1="229" y1="381.5" x2="1234" y2="381.5" stroke="#939393" stroke-width="1" stroke-dasharray="3.2 2.5"/><path d="M228.5 385.5 V79.5 H1234.5 V385.5 H228.5" fill="none" stroke="#c4c4c4" stroke-width="1"/><line x1="229.5" y1="385" x2="229.5" y2="389" stroke="#c4c4c4" stroke-width="1"/><text x="228" y="396.5" font-size="8.8" fill="#e8e8e8" font-family="Liberation Sans">9 Jan 2026</text><line x1="290.5" y1="385" x2="290.5" y2="389" stroke="#c4c4c4" stroke-width="1"/><text x="289" y="396.5" font-size="8.8" fill="#e8e8e8" font-family="Liberation Sans">9 Jan 13:45</text><line x1="350.5" y1="385" x2="350.5" y2="389" stroke="#c4c4c4" stroke-width="1"/><text x="349" y="396.5" font-size="8.8" fill="#e8e8e8" font-family="Liberation Sans">9 Jan 14:25</text><line x1="411.5" y1="385" x2="411.5" y2="389" stroke="#c4c4c4" stroke-width="1"/><text x="410" y="396.5" font-size="8.8" fill="#e8e8e8" font-family="Liberation Sans">9 Jan 15:05</text><line x1="472.5" y1="385" x2="472.5" y2="389" stroke="#c4c4c4" stroke-width="1"/><text x="471" y="396.5" font-size="8.8" fill="#e8e8e8" font-family="Liberation Sans">9 Jan 15:45</text><line x1="532.5" y1="385" x2="532.5" y2="389" stroke="#c4c4c4" stroke-width="1"/><text x="531" y="396.5" font-size="8.8" fill="#e8e8e8" font-family="Liberation Sans">9 Jan 16:25</text><line x1="593.5" y1="385" x2="593.5" y2="389" stroke="#c4c4c4" stroke-width="1"/><text x="592" y="396.5" font-size="8.8" fill="#e8e8e8" font-family="Liberation Sans">9 Jan 17:05</text><line x1="654.5" y1="385" x2="654.5" y2="389" stroke="#c4c4c4" stroke-width="1"/><text x="653" y="396.5" font-size="8.8" fill="#e8e8e8" font-family="Liberation Sans">9 Jan 17:45</text><line x1="715.5" y1="385" x2="715.5" y2="389" stroke="#c4c4c4" stroke-width="1"/><text x="714" y="396.5" font-size="8.8" fill="#e8e8e8" font-family="Liberation Sans">9 Jan 18:25</text><line x1="775.5" y1="385" x2="775.5" y2="389" stroke="#c4c4c4" stroke-width="1"/><text x="774" y="396.5" font-size="8.8" fill="#e8e8e8" font-family="Liberation Sans">9 Jan 19:05</text><line x1="836.5" y1="385" x2="836.5" y2="389" stroke="#c4c4c4" stroke-width="1"/><text x="835" y="396.5" font-size="8.8" fill="#e8e8e8" font-family="Liberation Sans">9 Jan 19:45</text><line x1="897.5" y1="385" x2="897.5" y2="389" stroke="#c4c4c4" stroke-width="1"/><text x="896" y="396.5" font-size="8.8" fill="#e8e8e8" font-family="Liberation Sans">9 Jan 20:25</text><line x1="957.5" y1="385" x2="957.5" y2="389" stroke="#c4c4c4" stroke-width="1"/><text x="956" y="396.5" font-size="8.8" fill="#e8e8e8" font-family="Liberation Sans">9 Jan 21:05</text><line x1="1018.5" y1="385" x2="1018.5" y2="389" stroke="#c4c4c4" stroke-width="1"/><text x="1017" y="396.5" font-size="8.8" fill="#e8e8e8" font-family="Liberation Sans">9 Jan 21:45</text><line x1="1234" y1="101.5" x2="1238" y2="101.5" stroke="#c4c4c4" stroke-width="1"/><text x="1238.5" y="103.8" font-size="9.3" fill="#e8e8e8" font-family="Liberation Sans">4515.90</text><line x1="1234" y1="132.5" x2="1238" y2="132.5" stroke="#c4c4c4" stroke-width="1"/><text x="1238.5" y="134.8" font-size="9.3" fill="#e8e8e8" font-family="Liberation Sans">4509.45</text><line x1="1234" y1="163.5" x2="1238" y2="163.5" stroke="#c4c4c4" stroke-width="1"/><text x="1238.5" y="165.8" font-size="9.3" fill="#e8e8e8" font-family="Liberation Sans">4503.15</text><line x1="1234" y1="194.5" x2="1238" y2="194.5" stroke="#c4c4c4" stroke-width="1"/><text x="1238.5" y="196.8" font-size="9.3" fill="#e8e8e8" font-family="Liberation Sans">4496.70</text><line x1="1234" y1="226.5" x2="1238" y2="226.5" stroke="#c4c4c4" stroke-width="1"/><text x="1238.5" y="228.8" font-size="9.3" fill="#e8e8e8" font-family="Liberation Sans">4490.40</text><line x1="1234" y1="257.5" x2="1238" y2="257.5" stroke="#c4c4c4" stroke-width="1"/><text x="1238.5" y="259.8" font-size="9.3" fill="#e8e8e8" font-family="Liberation Sans">4483.95</text><line x1="1234" y1="288.5" x2="1238" y2="288.5" stroke="#c4c4c4" stroke-width="1"/><text x="1238.5" y="290.8" font-size="9.3" fill="#e8e8e8" font-family="Liberation Sans">4477.65</text><line x1="1234" y1="319.5" x2="1238" y2="319.5" stroke="#c4c4c4" stroke-width="1"/><text x="1238.5" y="321.8" font-size="9.3" fill="#e8e8e8" font-family="Liberation Sans">4471.20</text><line x1="1234" y1="350.5" x2="1238" y2="350.5" stroke="#c4c4c4" stroke-width="1"/><text x="1238.5" y="352.8" font-size="9.3" fill="#e8e8e8" font-family="Liberation Sans">4464.90</text><line x1="1234" y1="381.5" x2="1238" y2="381.5" stroke="#c4c4c4" stroke-width="1"/><text x="1238.5" y="383.8" font-size="9.3" fill="#e8e8e8" font-family="Liberation Sans">4458.45</text><line x1="228.5" y1="173" x2="1234" y2="173" stroke="#2cb82c" stroke-width="2" stroke-dasharray="8.5 4.5 3.2 6.55"/><line x1="228.5" y1="246.8" x2="1234" y2="246.8" stroke="#b81a1a" stroke-width="2" stroke-dasharray="8.5 4.5 3.2 6.55"/><line x1="229" y1="188.5" x2="1234" y2="188.5" stroke="#a8a8a8" stroke-width="1"/><path d="M229.5 305 V327 M226.5 314.5 H229.5 M229.5 324.5 H232.5" stroke="#2ec42e" stroke-width="1.25" fill="none" shape-rendering="auto"/><path d="M237.5 314 V327 M234.5 324.5 H237.5 M237.5 314.5 H240.5" stroke="#2ec42e" stroke-width="1.25" fill="none" shape-rendering="auto"/><path d="M244.5 311 V319 M241.5 315.5 H244.5 M244.5 315.5 H247.5" stroke="#2ec42e" stroke-width="1.25" fill="none" shape-rendering="auto"/><path d="M252.5 311 V319 M249.5 314.5 H252.5 M252.5 314.5 H255.5" stroke="#2ec42e" stroke-width="1.25" fill="none" shape-rendering="auto"/><path d="M259.5 312 V324 M256.5 314.5 H259.5 M259.5 323.5 H262.5" stroke="#2ec42e" stroke-width="1.25" fill="none" shape-rendering="auto"/><path d="M267.5 320 V331 M264.5 322.5 H267.5 M267.5 322.5 H270.5" stroke="#2ec42e" stroke-width="1.25" fill="none" shape-rendering="auto"/><path d="M274.5 315 V330 M271.5 322.5 H274.5 M274.5 316.5 H277.5" stroke="#2ec42e" stroke-width="1.25" fill="none" shape-rendering="auto"/><path d="M282.5 316 V331 M279.5 317.5 H282.5 M282.5 323.5 H285.5" stroke="#2ec42e" stroke-width="1.25" fill="none" shape-rendering="auto"/><path d="M290.5 313 V333 M287.5 322.5 H290.5 M290.5 314.5 H293.5" stroke="#2ec42e" stroke-width="1.25" fill="none" shape-rendering="auto"/><path d="M297.5 307 V319 M294.5 313.5 H297.5 M297.5 308.5 H300.5" stroke="#2ec42e" stroke-width="1.25" fill="none" shape-rendering="auto"/><path d="M305.5 296 V309 M302.5 308.5 H305.5 M305.5 298.5 H308.5" stroke="#2ec42e" stroke-width="1.25" fill="none" shape-rendering="auto"/><path d="M312.5 282 V299 M309.5 297.5 H312.5 M312.5 290.5 H315.5" stroke="#2ec42e" stroke-width="1.25" fill="none" shape-rendering="auto"/><path d="M320.5 272 V291 M317.5 290.5 H320.5 M320.5 288.5 H323.5" stroke="#2ec42e" stroke-width="1.25" fill="none" shape-rendering="auto"/><path d="M328.5 289 V317 M325.5 289.5 H328.5 M328.5 305.5 H331.5" stroke="#2ec42e" stroke-width="1.25" fill="none" shape-rendering="auto"/><path d="M335.5 301 V310 M332.5 304.5 H335.5 M335.5 308.5 H338.5" stroke="#2ec42e" stroke-width="1.25" fill="none" shape-rendering="auto"/><path d="M343.5 308 V325 M340.5 308.5 H343.5 M343.5 322.5 H346.5" stroke="#2ec42e" stroke-width="1.25" fill="none" shape-rendering="auto"/><path d="M350.5 322 V342 M347.5 322.5 H350.5 M350.5 336.5 H353.5" stroke="#2ec42e" stroke-width="1.25" fill="none" shape-rendering="auto"/><path d="M358.5 332 V370 M355.5 336.5 H358.5 M358.5 351.5 H361.5" stroke="#2ec42e" stroke-width="1.25" fill="none" shape-rendering="auto"/><path d="M366.5 343 V361 M363.5 351.5 H366.5 M366.5 346.5 H369.5" stroke="#2ec42e" stroke-width="1.25" fill="none" shape-rendering="auto"/><path d="M373.5 339 V354 M370.5 346.5 H373.5 M373.5 344.5 H376.5" stroke="#2ec42e" stroke-width="1.25" fill="none" shape-rendering="auto"/><path d="M381.5 333 V352 M378.5 344.5 H381.5 M381.5 338.5 H384.5" stroke="#2ec42e" stroke-width="1.25" fill="none" shape-rendering="auto"/><path d="M388.5 337 V358 M385.5 337.5 H388.5 M388.5 354.5 H391.5" stroke="#2ec42e" stroke-width="1.25" fill="none" shape-rendering="auto"/><path d="M396.5 336 V358 M393.5 354.5 H396.5 M396.5 345.5 H399.5" stroke="#2ec42e" stroke-width="1.25" fill="none" shape-rendering="auto"/><path d="M403.5 323 V357 M400.5 344.5 H403.5 M403.5 327.5 H406.5" stroke="#2ec42e" stroke-width="1.25" fill="none" shape-rendering="auto"/><path d="M411.5 305 V330 M408.5 328.5 H411.5 M411.5 325.5 H414.5" stroke="#2ec42e" stroke-width="1.25" fill="none" shape-rendering="auto"/><path d="M419.5 318 V343 M416.5 326.5 H419.5 M419.5 338.5 H422.5" stroke="#2ec42e" stroke-width="1.25" fill="none" shape-rendering="auto"/><path d="M426.5 330 V360 M423.5 337.5 H426.5 M426.5 356.5 H429.5" stroke="#2ec42e" stroke-width="1.25" fill="none" shape-rendering="auto"/><path d="M434.5 307 V365 M431.5 356.5 H434.5 M434.5 315.5 H437.5" stroke="#2ec42e" stroke-width="1.25" fill="none" shape-rendering="auto"/><path d="M441.5 301 V327 M438.5 315.5 H441.5 M441.5 310.5 H444.5" stroke="#2ec42e" stroke-width="1.25" fill="none" shape-rendering="auto"/><path d="M449.5 235 V379 M446.5 312.5 H449.5 M449.5 242.5 H452.5" stroke="#2ec42e" stroke-width="1.25" fill="none" shape-rendering="auto"/><path d="M457.5 229 V283 M454.5 242.5 H457.5 M457.5 234.5 H460.5" stroke="#2ec42e" stroke-width="1.25" fill="none" shape-rendering="auto"/><path d="M464.5 218 V260 M461.5 234.5 H464.5 M464.5 243.5 H467.5" stroke="#2ec42e" stroke-width="1.25" fill="none" shape-rendering="auto"/><path d="M472.5 232 V270 M469.5 242.5 H472.5 M472.5 261.5 H475.5" stroke="#2ec42e" stroke-width="1.25" fill="none" shape-rendering="auto"/><path d="M479.5 252 V283 M476.5 259.5 H479.5 M479.5 263.5 H482.5" stroke="#2ec42e" stroke-width="1.25" fill="none" shape-rendering="auto"/><path d="M487.5 250 V279 M484.5 262.5 H487.5 M487.5 262.5 H490.5" stroke="#2ec42e" stroke-width="1.25" fill="none" shape-rendering="auto"/><path d="M495.5 237 V272 M492.5 263.5 H495.5 M495.5 249.5 H498.5" stroke="#2ec42e" stroke-width="1.25" fill="none" shape-rendering="auto"/><path d="M502.5 238 V275 M499.5 251.5 H502.5 M502.5 242.5 H505.5" stroke="#2ec42e" stroke-width="1.25" fill="none" shape-rendering="auto"/><path d="M510.5 194 V246 M507.5 242.5 H510.5 M510.5 231.5 H513.5" stroke="#2ec42e" stroke-width="1.25" fill="none" shape-rendering="auto"/><path d="M517.5 215 V259 M514.5 230.5 H517.5 M517.5 242.5 H520.5" stroke="#2ec42e" stroke-width="1.25" fill="none" shape-rendering="auto"/><path d="M525.5 199 V244 M522.5 242.5 H525.5 M525.5 209.5 H528.5" stroke="#2ec42e" stroke-width="1.25" fill="none" shape-rendering="auto"/><path d="M532.5 198 V220 M529.5 208.5 H532.5 M532.5 206.5 H535.5" stroke="#2ec42e" stroke-width="1.25" fill="none" shape-rendering="auto"/><path d="M540.5 210 V265 M537.5 210.5 H540.5 M540.5 228.5 H543.5" stroke="#2ec42e" stroke-width="1.25" fill="none" shape-rendering="auto"/><path d="M548.5 188 V233 M545.5 230.5 H548.5 M548.5 195.5 H551.5" stroke="#2ec42e" stroke-width="1.25" fill="none" shape-rendering="auto"/><path d="M555.5 188 V247 M552.5 199.5 H555.5 M555.5 237.5 H558.5" stroke="#2ec42e" stroke-width="1.25" fill="none" shape-rendering="auto"/><path d="M563.5 232 V269 M560.5 239.5 H563.5 M563.5 252.5 H566.5" stroke="#2ec42e" stroke-width="1.25" fill="none" shape-rendering="auto"/><path d="M570.5 222 V283 M567.5 253.5 H570.5 M570.5 224.5 H573.5" stroke="#2ec42e" stroke-width="1.25" fill="none" shape-rendering="auto"/><path d="M578.5 201 V225 M575.5 224.5 H578.5 M578.5 205.5 H581.5" stroke="#2ec42e" stroke-width="1.25" fill="none" shape-rendering="auto"/><path d="M586.5 183 V218 M583.5 204.5 H586.5 M586.5 209.5 H589.5" stroke="#2ec42e" stroke-width="1.25" fill="none" shape-rendering="auto"/><path d="M593.5 175 V226 M590.5 209.5 H593.5 M593.5 180.5 H596.5" stroke="#2ec42e" stroke-width="1.25" fill="none" shape-rendering="auto"/><path d="M601.5 180 V211 M598.5 182.5 H601.5 M601.5 196.5 H604.5" stroke="#2ec42e" stroke-width="1.25" fill="none" shape-rendering="auto"/><path d="M608.5 181 V211 M605.5 195.5 H608.5 M608.5 182.5 H611.5" stroke="#2ec42e" stroke-width="1.25" fill="none" shape-rendering="auto"/><path d="M616.5 125 V202 M613.5 182.5 H616.5 M616.5 136.5 H619.5" stroke="#2ec42e" stroke-width="1.25" fill="none" shape-rendering="auto"/><path d="M624.5 124 V161 M621.5 136.5 H624.5 M624.5 152.5 H627.5" stroke="#2ec42e" stroke-width="1.25" fill="none" shape-rendering="auto"/><path d="M631.5 120 V153 M628.5 151.5 H631.5 M631.5 147.5 H634.5" stroke="#2ec42e" stroke-width="1.25" fill="none" shape-rendering="auto"/><path d="M639.5 101 V149 M636.5 147.5 H639.5 M639.5 102.5 H642.5" stroke="#2ec42e" stroke-width="1.25" fill="none" shape-rendering="auto"/><path d="M646.5 94 V115 M643.5 102.5 H646.5 M646.5 107.5 H649.5" stroke="#2ec42e" stroke-width="1.25" fill="none" shape-rendering="auto"/><path d="M654.5 106 V139 M651.5 107.5 H654.5 M654.5 124.5 H657.5" stroke="#2ec42e" stroke-width="1.25" fill="none" shape-rendering="auto"/><path d="M661.5 106 V136 M658.5 124.5 H661.5 M661.5 120.5 H664.5" stroke="#2ec42e" stroke-width="1.25" fill="none" shape-rendering="auto"/><path d="M669.5 110 V131 M666.5 118.5 H669.5 M669.5 118.5 H672.5" stroke="#2ec42e" stroke-width="1.25" fill="none" shape-rendering="auto"/><path d="M677.5 107 V125 M674.5 115.5 H677.5 M677.5 121.5 H680.5" stroke="#2ec42e" stroke-width="1.25" fill="none" shape-rendering="auto"/><path d="M684.5 116 V155 M681.5 119.5 H684.5 M684.5 141.5 H687.5" stroke="#2ec42e" stroke-width="1.25" fill="none" shape-rendering="auto"/><path d="M692.5 138 V182 M689.5 141.5 H692.5 M692.5 164.5 H695.5" stroke="#2ec42e" stroke-width="1.25" fill="none" shape-rendering="auto"/><path d="M699.5 146 V171 M696.5 164.5 H699.5 M699.5 146.5 H702.5" stroke="#2ec42e" stroke-width="1.25" fill="none" shape-rendering="auto"/><path d="M707.5 143 V175 M704.5 146.5 H707.5 M707.5 167.5 H710.5" stroke="#2ec42e" stroke-width="1.25" fill="none" shape-rendering="auto"/><path d="M715.5 151 V179 M712.5 168.5 H715.5 M715.5 160.5 H718.5" stroke="#2ec42e" stroke-width="1.25" fill="none" shape-rendering="auto"/><path d="M722.5 151 V175 M719.5 160.5 H722.5 M722.5 160.5 H725.5" stroke="#2ec42e" stroke-width="1.25" fill="none" shape-rendering="auto"/><path d="M730.5 145 V171 M727.5 161.5 H730.5 M730.5 154.5 H733.5" stroke="#2ec42e" stroke-width="1.25" fill="none" shape-rendering="auto"/><path d="M737.5 153 V172 M734.5 154.5 H737.5 M737.5 155.5 H740.5" stroke="#2ec42e" stroke-width="1.25" fill="none" shape-rendering="auto"/><path d="M745.5 145 V172 M742.5 155.5 H745.5 M745.5 152.5 H748.5" stroke="#2ec42e" stroke-width="1.25" fill="none" shape-rendering="auto"/><path d="M752.5 138 V156 M749.5 152.5 H752.5 M752.5 141.5 H755.5" stroke="#2ec42e" stroke-width="1.25" fill="none" shape-rendering="auto"/><path d="M760.5 138 V149 M757.5 142.5 H760.5 M760.5 147.5 H763.5" stroke="#2ec42e" stroke-width="1.25" fill="none" shape-rendering="auto"/><path d="M768.5 121 V157 M765.5 144.5 H768.5 M768.5 144.5 H771.5" stroke="#2ec42e" stroke-width="1.25" fill="none" shape-rendering="auto"/><path d="M775.5 128 V153 M772.5 140.5 H775.5 M775.5 136.5 H778.5" stroke="#2ec42e" stroke-width="1.25" fill="none" shape-rendering="auto"/><path d="M783.5 127 V142 M780.5 134.5 H783.5 M783.5 135.5 H786.5" stroke="#2ec42e" stroke-width="1.25" fill="none" shape-rendering="auto"/><path d="M790.5 134 V156 M787.5 134.5 H790.5 M790.5 145.5 H793.5" stroke="#2ec42e" stroke-width="1.25" fill="none" shape-rendering="auto"/><path d="M798.5 145 V169 M795.5 145.5 H798.5 M798.5 152.5 H801.5" stroke="#2ec42e" stroke-width="1.25" fill="none" shape-rendering="auto"/><path d="M806.5 150 V169 M803.5 152.5 H806.5 M806.5 160.5 H809.5" stroke="#2ec42e" stroke-width="1.25" fill="none" shape-rendering="auto"/><path d="M813.5 129 V164 M810.5 160.5 H813.5 M813.5 139.5 H816.5" stroke="#2ec42e" stroke-width="1.25" fill="none" shape-rendering="auto"/><path d="M821.5 138 V154 M818.5 139.5 H821.5 M821.5 148.5 H824.5" stroke="#2ec42e" stroke-width="1.25" fill="none" shape-rendering="auto"/><path d="M828.5 148 V172 M825.5 148.5 H828.5 M828.5 169.5 H831.5" stroke="#2ec42e" stroke-width="1.25" fill="none" shape-rendering="auto"/><path d="M836.5 163 V195 M833.5 169.5 H836.5 M836.5 189.5 H839.5" stroke="#2ec42e" stroke-width="1.25" fill="none" shape-rendering="auto"/><path d="M844.5 186 V250 M841.5 188.5 H844.5 M844.5 240.5 H847.5" stroke="#2ec42e" stroke-width="1.25" fill="none" shape-rendering="auto"/><path d="M851.5 234 V269 M848.5 240.5 H851.5 M851.5 254.5 H854.5" stroke="#2ec42e" stroke-width="1.25" fill="none" shape-rendering="auto"/><path d="M859.5 236 V262 M856.5 257.5 H859.5 M859.5 247.5 H862.5" stroke="#2ec42e" stroke-width="1.25" fill="none" shape-rendering="auto"/><path d="M866.5 210 V253 M863.5 247.5 H866.5 M866.5 231.5 H869.5" stroke="#2ec42e" stroke-width="1.25" fill="none" shape-rendering="auto"/><path d="M874.5 212 V237 M871.5 231.5 H874.5 M874.5 212.5 H877.5" stroke="#2ec42e" stroke-width="1.25" fill="none" shape-rendering="auto"/><path d="M881.5 206 V223 M878.5 213.5 H881.5 M881.5 218.5 H884.5" stroke="#2ec42e" stroke-width="1.25" fill="none" shape-rendering="auto"/><path d="M889.5 205 V230 M886.5 218.5 H889.5 M889.5 218.5 H892.5" stroke="#2ec42e" stroke-width="1.25" fill="none" shape-rendering="auto"/><path d="M897.5 210 V230 M894.5 218.5 H897.5 M897.5 220.5 H900.5" stroke="#2ec42e" stroke-width="1.25" fill="none" shape-rendering="auto"/><path d="M904.5 173 V223 M901.5 222.5 H904.5 M904.5 173.5 H907.5" stroke="#2ec42e" stroke-width="1.25" fill="none" shape-rendering="auto"/><path d="M912.5 157 V175 M909.5 173.5 H912.5 M912.5 159.5 H915.5" stroke="#2ec42e" stroke-width="1.25" fill="none" shape-rendering="auto"/><path d="M919.5 155 V172 M916.5 159.5 H919.5 M919.5 167.5 H922.5" stroke="#2ec42e" stroke-width="1.25" fill="none" shape-rendering="auto"/><path d="M927.5 164 V198 M924.5 166.5 H927.5 M927.5 185.5 H930.5" stroke="#2ec42e" stroke-width="1.25" fill="none" shape-rendering="auto"/><path d="M935.5 185 V203 M932.5 185.5 H935.5 M935.5 195.5 H938.5" stroke="#2ec42e" stroke-width="1.25" fill="none" shape-rendering="auto"/><path d="M942.5 186 V203 M939.5 194.5 H942.5 M942.5 197.5 H945.5" stroke="#2ec42e" stroke-width="1.25" fill="none" shape-rendering="auto"/><path d="M950.5 188 V208 M947.5 197.5 H950.5 M950.5 205.5 H953.5" stroke="#2ec42e" stroke-width="1.25" fill="none" shape-rendering="auto"/><path d="M957.5 200 V216 M954.5 205.5 H957.5 M957.5 205.5 H960.5" stroke="#2ec42e" stroke-width="1.25" fill="none" shape-rendering="auto"/><path d="M965.5 190 V209 M962.5 204.5 H965.5 M965.5 193.5 H968.5" stroke="#2ec42e" stroke-width="1.25" fill="none" shape-rendering="auto"/><path d="M973.5 180 V195 M970.5 194.5 H973.5 M973.5 180.5 H976.5" stroke="#2ec42e" stroke-width="1.25" fill="none" shape-rendering="auto"/><path d="M980.5 170 V192 M977.5 191.5 H980.5 M980.5 172.5 H983.5" stroke="#2ec42e" stroke-width="1.25" fill="none" shape-rendering="auto"/><path d="M988.5 170 V189 M985.5 172.5 H988.5 M988.5 185.5 H991.5" stroke="#2ec42e" stroke-width="1.25" fill="none" shape-rendering="auto"/><path d="M995.5 183 V200 M992.5 185.5 H995.5 M995.5 187.5 H998.5" stroke="#2ec42e" stroke-width="1.25" fill="none" shape-rendering="auto"/><path d="M1003.5 179 V192 M1000.5 187.5 H1003.5 M1003.5 180.5 H1006.5" stroke="#2ec42e" stroke-width="1.25" fill="none" shape-rendering="auto"/><path d="M1010.5 177 V197 M1007.5 179.5 H1010.5 M1010.5 194.5 H1013.5" stroke="#2ec42e" stroke-width="1.25" fill="none" shape-rendering="auto"/><path d="M1018.5 187 V195 M1015.5 193.5 H1018.5 M1018.5 188.5 H1021.5" stroke="#2ec42e" stroke-width="1.25" fill="none" shape-rendering="auto"/><text x="235" y="170.8" font-size="9" fill="#f0f0f0" font-family="Liberation Sans" font-weight="bold">#57843826 buy 0.56</text><text x="235" y="244.6" font-size="9" fill="#f0f0f0" font-family="Liberation Sans" font-weight="bold">#57843826 sl</text><path d="M231 84 h7 l-3.5 4z" fill="#fff"/><text x="242" y="90.5" font-size="9" fill="#e8e8e8" font-family="Liberation Sans" xml:space="preserve">XAUUSD,M5  4496.82 4498.11 4496.82 4498.02</text><text x="1156" y="91.5" font-size="9.2" fill="#e8e8e8" font-family="Liberation Sans">Savage Pips Ai</text><circle cx="1224" cy="87.5" r="5.5" fill="none" stroke="#e0e0e0" stroke-width="1" shape-rendering="auto"/><path d="M1221 89 q3 3 6 0" stroke="#e0e0e0" fill="none" shape-rendering="auto"/><rect x="1222" y="85" width="1" height="1" fill="#e0e0e0"/><rect x="1225" y="85" width="1" height="1" fill="#e0e0e0"/><path d="M1027 77 h10 l-5 5z" fill="#9a9a9a"/><rect x="1236" y="183" width="38" height="10" fill="#fff"/><text x="1239" y="191.5" font-size="9.3" fill="#000" font-family="Liberation Sans">4498.02</text></svg><div class="a" style="left:225px;top:76px;width:1053px;height:1px;background:#303030;"></div><div class="a" style="left:1277px;top:76px;width:2px;height:330px;background:#ffffff;"></div><div class="a" style="left:225px;top:405px;width:1052px;height:1px;background:#b8b8b8;"></div><div class="a" style="left:225px;top:406px;width:1052px;height:19px;background:#f0f0f0;"></div><div class="a" style="left:224px;top:406px;width:7px;height:18px;border:1.5px solid #505050;border-bottom:none"></div><div class="a" style="left:229px;top:406px;width:84px;height:18.5px;background:#fff;border:1.5px solid #505050;border-top:none"></div><div class="a" style="left:240px;top:410px;font-size:11px;color:#2a2a2a;">XAUUSD,M5</div><div class="a" style="left:323px;top:410px;font-size:11px;color:#9a9a9a;">NAS100,M5</div><div class="a" style="left:392px;top:410px;width:1px;height:12px;background:#9a9a9a;"></div><div class="a" style="left:403px;top:410px;font-size:11px;color:#9a9a9a;">US30,M5</div><div class="a" style="left:457px;top:410px;width:1px;height:12px;background:#9a9a9a;"></div><svg class="a" style="left:1247px;top:411px" width="26" height="9" viewBox="0 0 26 9"><path d="M5 1 l-4 3.5 l4 3.5z" fill="#a8a8a8"/><path d="M21 1 l4 3.5 l-4 3.5z" fill="#a8a8a8"/></svg><div class="a" style="left:1px;top:425px;width:1279px;height:200px;background:#f0f0f0;"></div><svg class="a" style="left:4.5px;top:432px" width="6" height="6" viewBox="0 0 6 6"><path d="M0.5 0.5l5 5M5.5 0.5l-5 5" stroke="#111" stroke-width="1.5"/></svg><div class="a" style="left:2px;top:442px;width:12px;height:181px;background:linear-gradient(90deg,#b9cde6,#a9c2e0);"></div><div class="a" style="left:2px;top:620px;width:12px;transform:rotate(-90deg);transform-origin:0 0;font-size:11px;color:#1a1a1a;line-height:12px">Terminal</div><div class="a" style="left:15px;top:429px;width:1262px;height:173px;background:#ffffff;"></div><div class="a" style="left:15px;top:429px;width:1262px;height:1px;background:#d0d0d0;"></div><div class="a" style="left:15px;top:429px;width:1px;height:173px;background:#c8c8c8;"></div><div class="a" style="left:125px;top:430px;width:1px;height:23px;background:#e8e8e8;"></div><div class="a" style="left:312px;top:430px;width:1px;height:23px;background:#e8e8e8;"></div><div class="a" style="left:398px;top:430px;width:1px;height:23px;background:#e8e8e8;"></div><div class="a" style="left:464px;top:430px;width:1px;height:23px;background:#e8e8e8;"></div><div class="a" style="left:548px;top:430px;width:1px;height:23px;background:#e8e8e8;"></div><div class="a" style="left:633px;top:430px;width:1px;height:23px;background:#e8e8e8;"></div><div class="a" style="left:718px;top:430px;width:1px;height:23px;background:#e8e8e8;"></div><div class="a" style="left:802px;top:430px;width:1px;height:23px;background:#e8e8e8;"></div><div class="a" style="left:988px;top:430px;width:1px;height:23px;background:#e8e8e8;"></div><div class="a" style="left:1072px;top:430px;width:1px;height:23px;background:#e8e8e8;"></div><div class="a" style="left:1157px;top:430px;width:1px;height:23px;background:#e8e8e8;"></div><div class="a" style="left:1259px;top:430px;width:1px;height:23px;background:#e8e8e8;"></div><div class="a" style="left:16px;top:452.5px;width:1243px;height:1px;background:#d4d4d4;"></div><div class="a" style="left:22px;top:436px;font-size:11px;color:#333;letter-spacing:-0.2px">Order</div><div class="a" style="left:61px;top:437px;font-size:10px;color:#aaa;">/</div><div class="a r" style="left:125px;top:436px;width:182px;font-size:11px;color:#333;letter-spacing:-0.2px">Time</div><div class="a r" style="left:312px;top:436px;width:81px;font-size:11px;color:#333;letter-spacing:-0.2px">Type</div><div class="a r" style="left:398px;top:436px;width:61px;font-size:11px;color:#333;letter-spacing:-0.2px">Size</div><div class="a r" style="left:464px;top:436px;width:79px;font-size:11px;color:#333;letter-spacing:-0.2px">Symbol</div><div class="a r" style="left:548px;top:436px;width:80px;font-size:11px;color:#333;letter-spacing:-0.2px">Price</div><div class="a r" style="left:633px;top:436px;width:80px;font-size:11px;color:#333;letter-spacing:-0.2px">S / L</div><div class="a r" style="left:718px;top:436px;width:79px;font-size:11px;color:#333;letter-spacing:-0.2px">T / P</div><div class="a r" style="left:802px;top:436px;width:181px;font-size:11px;color:#333;letter-spacing:-0.2px">Time</div><div class="a r" style="left:988px;top:436px;width:79px;font-size:11px;color:#333;letter-spacing:-0.2px">Price</div><div class="a r" style="left:1072px;top:436px;width:80px;font-size:11px;color:#333;letter-spacing:-0.2px">Swap</div><div class="a r" style="left:1157px;top:436px;width:97px;font-size:11px;color:#333;letter-spacing:-0.2px">Profit</div><div class="a" style="left:16px;top:453px;width:1243px;height:19px;background:#ffffff;"></div><div class="a" style="left:125px;top:453px;width:1px;height:19px;background:#e4e4e4;"></div><div class="a" style="left:312px;top:453px;width:1px;height:19px;background:#e4e4e4;"></div><div class="a" style="left:398px;top:453px;width:1px;height:19px;background:#e4e4e4;"></div><div class="a" style="left:464px;top:453px;width:1px;height:19px;background:#e4e4e4;"></div><div class="a" style="left:548px;top:453px;width:1px;height:19px;background:#e4e4e4;"></div><div class="a" style="left:633px;top:453px;width:1px;height:19px;background:#e4e4e4;"></div><div class="a" style="left:718px;top:453px;width:1px;height:19px;background:#e4e4e4;"></div><div class="a" style="left:802px;top:453px;width:1px;height:19px;background:#e4e4e4;"></div><div class="a" style="left:988px;top:453px;width:1px;height:19px;background:#e4e4e4;"></div><div class="a" style="left:1072px;top:453px;width:1px;height:19px;background:#e4e4e4;"></div><div class="a" style="left:1157px;top:453px;width:1px;height:19px;background:#e4e4e4;"></div><div class="a" style="left:634px;top:454px;width:81px;height:18px;background:#f8a3a3;"></div><svg class="a" style="left:19px;top:456px" width="14" height="14" viewBox="0 0 14 14">
<path d="M1.5 0.5 h6 l3 3 v9 h-9z" fill="#fdfdfd" stroke="#5a5a5a" stroke-width="1"/><path d="M7.5 0.5 v3 h3" fill="none" stroke="#5a5a5a"/>
<circle cx="10" cy="10.5" r="3.2" fill="#1e90e8" stroke="#0a5fb0" stroke-width="0.6"/></svg><div class="a" style="left:37px;top:457px;font-size:11px;color:#222;letter-spacing:-0.35px">57833303</div><div class="a r" style="left:125px;top:457px;width:183px;font-size:11px;letter-spacing:-0.35px;color:#222">2026.01.09 17:30:35</div><div class="a r" style="left:312px;top:457px;width:82px;font-size:11px;letter-spacing:-0.35px;color:#222">buy</div><div class="a r" style="left:398px;top:457px;width:62px;font-size:11px;letter-spacing:-0.35px;color:#222">0.05</div><div class="a r" style="left:464px;top:457px;width:80px;font-size:11px;letter-spacing:-0.35px;color:#222">nas100</div><div class="a r" style="left:548px;top:457px;width:81px;font-size:11px;letter-spacing:-0.35px;color:#222">25657.01</div><div class="a r" style="left:633px;top:457px;width:81px;font-size:11px;letter-spacing:-0.35px;color:#222">25718.11</div><div class="a r" style="left:718px;top:457px;width:80px;font-size:11px;letter-spacing:-0.35px;color:#222">25757.01</div><div class="a r" style="left:802px;top:457px;width:182px;font-size:11px;letter-spacing:-0.35px;color:#222">2026.01.09 19:18:18</div><div class="a r" style="left:988px;top:457px;width:80px;font-size:11px;letter-spacing:-0.35px;color:#222">25718.11</div><div class="a r" style="left:1072px;top:457px;width:81px;font-size:11px;letter-spacing:-0.35px;color:#222">0.00</div><div class="a r" style="left:1157px;top:457px;width:98px;font-size:11px;letter-spacing:-0.35px;color:#222">305.50</div><div class="a" style="left:16px;top:472px;width:1243px;height:19px;background:#ebebeb;"></div><div class="a" style="left:125px;top:472px;width:1px;height:19px;background:#f6f6f6;"></div><div class="a" style="left:312px;top:472px;width:1px;height:19px;background:#f6f6f6;"></div><div class="a" style="left:398px;top:472px;width:1px;height:19px;background:#f6f6f6;"></div><div class="a" style="left:464px;top:472px;width:1px;height:19px;background:#f6f6f6;"></div><div class="a" style="left:548px;top:472px;width:1px;height:19px;background:#f6f6f6;"></div><div class="a" style="left:633px;top:472px;width:1px;height:19px;background:#f6f6f6;"></div><div class="a" style="left:718px;top:472px;width:1px;height:19px;background:#f6f6f6;"></div><div class="a" style="left:802px;top:472px;width:1px;height:19px;background:#f6f6f6;"></div><div class="a" style="left:988px;top:472px;width:1px;height:19px;background:#f6f6f6;"></div><div class="a" style="left:1072px;top:472px;width:1px;height:19px;background:#f6f6f6;"></div><div class="a" style="left:1157px;top:472px;width:1px;height:19px;background:#f6f6f6;"></div><div class="a" style="left:634px;top:473px;width:81px;height:18px;background:#f8a3a3;"></div><svg class="a" style="left:19px;top:475px" width="14" height="14" viewBox="0 0 14 14">
<path d="M1.5 0.5 h6 l3 3 v9 h-9z" fill="#fdfdfd" stroke="#5a5a5a" stroke-width="1"/><path d="M7.5 0.5 v3 h3" fill="none" stroke="#5a5a5a"/>
<circle cx="10" cy="10.5" r="3.2" fill="#1e90e8" stroke="#0a5fb0" stroke-width="0.6"/></svg><div class="a" style="left:37px;top:476px;font-size:11px;color:#222;letter-spacing:-0.35px">57834763</div><div class="a r" style="left:125px;top:476px;width:183px;font-size:11px;letter-spacing:-0.35px;color:#222">2026.01.09 17:43:43</div><div class="a r" style="left:312px;top:476px;width:82px;font-size:11px;letter-spacing:-0.35px;color:#222">buy</div><div class="a r" style="left:398px;top:476px;width:62px;font-size:11px;letter-spacing:-0.35px;color:#222">0.56</div><div class="a r" style="left:464px;top:476px;width:80px;font-size:11px;letter-spacing:-0.35px;color:#222">xauusd</div><div class="a r" style="left:548px;top:476px;width:81px;font-size:11px;letter-spacing:-0.35px;color:#222">4513.41</div><div class="a r" style="left:633px;top:476px;width:81px;font-size:11px;letter-spacing:-0.35px;color:#222">4498.41</div><div class="a r" style="left:718px;top:476px;width:80px;font-size:11px;letter-spacing:-0.35px;color:#222">4541.18</div><div class="a r" style="left:802px;top:476px;width:182px;font-size:11px;letter-spacing:-0.35px;color:#222">2026.01.09 19:48:55</div><div class="a r" style="left:988px;top:476px;width:80px;font-size:11px;letter-spacing:-0.35px;color:#222">4498.41</div><div class="a r" style="left:1072px;top:476px;width:81px;font-size:11px;letter-spacing:-0.35px;color:#222">0.00</div><div class="a r" style="left:1157px;top:476px;width:98px;font-size:11px;letter-spacing:-0.35px;color:#222">-840.00</div><div class="a" style="left:16px;top:491px;width:1243px;height:19px;background:#ffffff;"></div><div class="a" style="left:125px;top:491px;width:1px;height:19px;background:#e4e4e4;"></div><div class="a" style="left:312px;top:491px;width:1px;height:19px;background:#e4e4e4;"></div><div class="a" style="left:398px;top:491px;width:1px;height:19px;background:#e4e4e4;"></div><div class="a" style="left:464px;top:491px;width:1px;height:19px;background:#e4e4e4;"></div><div class="a" style="left:548px;top:491px;width:1px;height:19px;background:#e4e4e4;"></div><div class="a" style="left:633px;top:491px;width:1px;height:19px;background:#e4e4e4;"></div><div class="a" style="left:718px;top:491px;width:1px;height:19px;background:#e4e4e4;"></div><div class="a" style="left:802px;top:491px;width:1px;height:19px;background:#e4e4e4;"></div><div class="a" style="left:988px;top:491px;width:1px;height:19px;background:#e4e4e4;"></div><div class="a" style="left:1072px;top:491px;width:1px;height:19px;background:#e4e4e4;"></div><div class="a" style="left:1157px;top:491px;width:1px;height:19px;background:#e4e4e4;"></div><div class="a" style="left:634px;top:492px;width:81px;height:18px;background:#f8a3a3;"></div><svg class="a" style="left:19px;top:494px" width="14" height="14" viewBox="0 0 14 14">
<path d="M1.5 0.5 h6 l3 3 v9 h-9z" fill="#fdfdfd" stroke="#5a5a5a" stroke-width="1"/><path d="M7.5 0.5 v3 h3" fill="none" stroke="#5a5a5a"/>
<circle cx="10" cy="10.5" r="3.2" fill="#1e90e8" stroke="#0a5fb0" stroke-width="0.6"/></svg><div class="a" style="left:37px;top:495px;font-size:11px;color:#222;letter-spacing:-0.35px">57834765</div><div class="a r" style="left:125px;top:495px;width:183px;font-size:11px;letter-spacing:-0.35px;color:#222">2026.01.09 17:43:43</div><div class="a r" style="left:312px;top:495px;width:82px;font-size:11px;letter-spacing:-0.35px;color:#222">buy</div><div class="a r" style="left:398px;top:495px;width:62px;font-size:11px;letter-spacing:-0.35px;color:#222">0.56</div><div class="a r" style="left:464px;top:495px;width:80px;font-size:11px;letter-spacing:-0.35px;color:#222">xauusd</div><div class="a r" style="left:548px;top:495px;width:81px;font-size:11px;letter-spacing:-0.35px;color:#222">4513.51</div><div class="a r" style="left:633px;top:495px;width:81px;font-size:11px;letter-spacing:-0.35px;color:#222">4498.51</div><div class="a r" style="left:718px;top:495px;width:80px;font-size:11px;letter-spacing:-0.35px;color:#222">4541.28</div><div class="a r" style="left:802px;top:495px;width:182px;font-size:11px;letter-spacing:-0.35px;color:#222">2026.01.09 19:48:55</div><div class="a r" style="left:988px;top:495px;width:80px;font-size:11px;letter-spacing:-0.35px;color:#222">4498.51</div><div class="a r" style="left:1072px;top:495px;width:81px;font-size:11px;letter-spacing:-0.35px;color:#222">0.00</div><div class="a r" style="left:1157px;top:495px;width:98px;font-size:11px;letter-spacing:-0.35px;color:#222">-840.00</div><div class="a" style="left:16px;top:510px;width:1243px;height:19px;background:#ebebeb;"></div><div class="a" style="left:125px;top:510px;width:1px;height:19px;background:#f6f6f6;"></div><div class="a" style="left:312px;top:510px;width:1px;height:19px;background:#f6f6f6;"></div><div class="a" style="left:398px;top:510px;width:1px;height:19px;background:#f6f6f6;"></div><div class="a" style="left:464px;top:510px;width:1px;height:19px;background:#f6f6f6;"></div><div class="a" style="left:548px;top:510px;width:1px;height:19px;background:#f6f6f6;"></div><div class="a" style="left:633px;top:510px;width:1px;height:19px;background:#f6f6f6;"></div><div class="a" style="left:718px;top:510px;width:1px;height:19px;background:#f6f6f6;"></div><div class="a" style="left:802px;top:510px;width:1px;height:19px;background:#f6f6f6;"></div><div class="a" style="left:988px;top:510px;width:1px;height:19px;background:#f6f6f6;"></div><div class="a" style="left:1072px;top:510px;width:1px;height:19px;background:#f6f6f6;"></div><div class="a" style="left:1157px;top:510px;width:1px;height:19px;background:#f6f6f6;"></div><div class="a" style="left:634px;top:511px;width:81px;height:18px;background:#f8a3a3;"></div><svg class="a" style="left:19px;top:513px" width="14" height="14" viewBox="0 0 14 14">
<path d="M1.5 0.5 h6 l3 3 v9 h-9z" fill="#fdfdfd" stroke="#5a5a5a" stroke-width="1"/><path d="M7.5 0.5 v3 h3" fill="none" stroke="#5a5a5a"/>
<circle cx="10" cy="10.5" r="3.2" fill="#1e90e8" stroke="#0a5fb0" stroke-width="0.6"/></svg><div class="a" style="left:37px;top:514px;font-size:11px;color:#222;letter-spacing:-0.35px">57834766</div><div class="a r" style="left:125px;top:514px;width:183px;font-size:11px;letter-spacing:-0.35px;color:#222">2026.01.09 17:43:44</div><div class="a r" style="left:312px;top:514px;width:82px;font-size:11px;letter-spacing:-0.35px;color:#222">buy</div><div class="a r" style="left:398px;top:514px;width:62px;font-size:11px;letter-spacing:-0.35px;color:#222">0.56</div><div class="a r" style="left:464px;top:514px;width:80px;font-size:11px;letter-spacing:-0.35px;color:#222">xauusd</div><div class="a r" style="left:548px;top:514px;width:81px;font-size:11px;letter-spacing:-0.35px;color:#222">4513.63</div><div class="a r" style="left:633px;top:514px;width:81px;font-size:11px;letter-spacing:-0.35px;color:#222">4498.63</div><div class="a r" style="left:718px;top:514px;width:80px;font-size:11px;letter-spacing:-0.35px;color:#222">4541.40</div><div class="a r" style="left:802px;top:514px;width:182px;font-size:11px;letter-spacing:-0.35px;color:#222">2026.01.09 19:48:55</div><div class="a r" style="left:988px;top:514px;width:80px;font-size:11px;letter-spacing:-0.35px;color:#222">4498.63</div><div class="a r" style="left:1072px;top:514px;width:81px;font-size:11px;letter-spacing:-0.35px;color:#222">0.00</div><div class="a r" style="left:1157px;top:514px;width:98px;font-size:11px;letter-spacing:-0.35px;color:#222">-840.00</div><div class="a" style="left:16px;top:529px;width:1243px;height:19px;background:#ffffff;"></div><div class="a" style="left:125px;top:529px;width:1px;height:19px;background:#e4e4e4;"></div><div class="a" style="left:312px;top:529px;width:1px;height:19px;background:#e4e4e4;"></div><div class="a" style="left:398px;top:529px;width:1px;height:19px;background:#e4e4e4;"></div><div class="a" style="left:464px;top:529px;width:1px;height:19px;background:#e4e4e4;"></div><div class="a" style="left:548px;top:529px;width:1px;height:19px;background:#e4e4e4;"></div><div class="a" style="left:633px;top:529px;width:1px;height:19px;background:#e4e4e4;"></div><div class="a" style="left:718px;top:529px;width:1px;height:19px;background:#e4e4e4;"></div><div class="a" style="left:802px;top:529px;width:1px;height:19px;background:#e4e4e4;"></div><div class="a" style="left:988px;top:529px;width:1px;height:19px;background:#e4e4e4;"></div><div class="a" style="left:1072px;top:529px;width:1px;height:19px;background:#e4e4e4;"></div><div class="a" style="left:1157px;top:529px;width:1px;height:19px;background:#e4e4e4;"></div><div class="a" style="left:634px;top:530px;width:81px;height:18px;background:#f8a3a3;"></div><svg class="a" style="left:19px;top:532px" width="14" height="14" viewBox="0 0 14 14">
<path d="M1.5 0.5 h6 l3 3 v9 h-9z" fill="#fdfdfd" stroke="#5a5a5a" stroke-width="1"/><path d="M7.5 0.5 v3 h3" fill="none" stroke="#5a5a5a"/>
<circle cx="10" cy="10.5" r="3.2" fill="#1e90e8" stroke="#0a5fb0" stroke-width="0.6"/></svg><div class="a" style="left:37px;top:533px;font-size:11px;color:#222;letter-spacing:-0.35px">57837930</div><div class="a r" style="left:125px;top:533px;width:183px;font-size:11px;letter-spacing:-0.35px;color:#222">2026.01.09 18:27:06</div><div class="a r" style="left:312px;top:533px;width:82px;font-size:11px;letter-spacing:-0.35px;color:#222">buy</div><div class="a r" style="left:398px;top:533px;width:62px;font-size:11px;letter-spacing:-0.35px;color:#222">0.05</div><div class="a r" style="left:464px;top:533px;width:80px;font-size:11px;letter-spacing:-0.35px;color:#222">us30</div><div class="a r" style="left:548px;top:533px;width:81px;font-size:11px;letter-spacing:-0.35px;color:#222">49441.49</div><div class="a r" style="left:633px;top:533px;width:81px;font-size:11px;letter-spacing:-0.35px;color:#222">49505.07</div><div class="a r" style="left:718px;top:533px;width:80px;font-size:11px;letter-spacing:-0.35px;color:#222">49551.49</div><div class="a r" style="left:802px;top:533px;width:182px;font-size:11px;letter-spacing:-0.35px;color:#222">2026.01.09 19:40:07</div><div class="a r" style="left:988px;top:533px;width:80px;font-size:11px;letter-spacing:-0.35px;color:#222">49505.07</div><div class="a r" style="left:1072px;top:533px;width:81px;font-size:11px;letter-spacing:-0.35px;color:#222">0.00</div><div class="a r" style="left:1157px;top:533px;width:98px;font-size:11px;letter-spacing:-0.35px;color:#222">317.90</div><div class="a" style="left:16px;top:548px;width:1243px;height:19px;background:#ebebeb;"></div><div class="a" style="left:125px;top:548px;width:1px;height:19px;background:#f6f6f6;"></div><div class="a" style="left:312px;top:548px;width:1px;height:19px;background:#f6f6f6;"></div><div class="a" style="left:398px;top:548px;width:1px;height:19px;background:#f6f6f6;"></div><div class="a" style="left:464px;top:548px;width:1px;height:19px;background:#f6f6f6;"></div><div class="a" style="left:548px;top:548px;width:1px;height:19px;background:#f6f6f6;"></div><div class="a" style="left:633px;top:548px;width:1px;height:19px;background:#f6f6f6;"></div><div class="a" style="left:718px;top:548px;width:1px;height:19px;background:#f6f6f6;"></div><div class="a" style="left:802px;top:548px;width:1px;height:19px;background:#f6f6f6;"></div><div class="a" style="left:988px;top:548px;width:1px;height:19px;background:#f6f6f6;"></div><div class="a" style="left:1072px;top:548px;width:1px;height:19px;background:#f6f6f6;"></div><div class="a" style="left:1157px;top:548px;width:1px;height:19px;background:#f6f6f6;"></div><div class="a" style="left:634px;top:549px;width:81px;height:18px;background:#f8a3a3;"></div><svg class="a" style="left:19px;top:551px" width="14" height="14" viewBox="0 0 14 14">
<path d="M1.5 0.5 h6 l3 3 v9 h-9z" fill="#fdfdfd" stroke="#5a5a5a" stroke-width="1"/><path d="M7.5 0.5 v3 h3" fill="none" stroke="#5a5a5a"/>
<circle cx="10" cy="10.5" r="3.2" fill="#1e90e8" stroke="#0a5fb0" stroke-width="0.6"/></svg><div class="a" style="left:37px;top:552px;font-size:11px;color:#222;letter-spacing:-0.35px">57837931</div><div class="a r" style="left:125px;top:552px;width:183px;font-size:11px;letter-spacing:-0.35px;color:#222">2026.01.09 18:27:06</div><div class="a r" style="left:312px;top:552px;width:82px;font-size:11px;letter-spacing:-0.35px;color:#222">buy</div><div class="a r" style="left:398px;top:552px;width:62px;font-size:11px;letter-spacing:-0.35px;color:#222">0.05</div><div class="a r" style="left:464px;top:552px;width:80px;font-size:11px;letter-spacing:-0.35px;color:#222">us30</div><div class="a r" style="left:548px;top:552px;width:81px;font-size:11px;letter-spacing:-0.35px;color:#222">49441.49</div><div class="a r" style="left:633px;top:552px;width:81px;font-size:11px;letter-spacing:-0.35px;color:#222">49505.07</div><div class="a r" style="left:718px;top:552px;width:80px;font-size:11px;letter-spacing:-0.35px;color:#222">49551.49</div><div class="a r" style="left:802px;top:552px;width:182px;font-size:11px;letter-spacing:-0.35px;color:#222">2026.01.09 19:40:07</div><div class="a r" style="left:988px;top:552px;width:80px;font-size:11px;letter-spacing:-0.35px;color:#222">49505.07</div><div class="a r" style="left:1072px;top:552px;width:81px;font-size:11px;letter-spacing:-0.35px;color:#222">0.00</div><div class="a r" style="left:1157px;top:552px;width:98px;font-size:11px;letter-spacing:-0.35px;color:#222">317.90</div><div class="a" style="left:16px;top:567px;width:1243px;height:18px;background:#c9c9c9;"></div><svg class="a" style="left:22px;top:571px" width="10" height="10" viewBox="0 0 10 10"><circle cx="5" cy="5" r="3.8" fill="none" stroke="#8a8a8a" stroke-width="1.2"/><path d="M3 7 l4 -4" stroke="#8a8a8a"/></svg><div class="a" style="left:37px;top:570px;font-size:11.2px;color:#111;font-weight:bold">Profit/Loss: 24 255.33&nbsp; Credit: 0.00&nbsp; Deposit: 0.00&nbsp; Withdrawal: 0.00</div><div class="a r" style="left:1100px;top:570px;width:155px;font-size:11.2px;font-weight:bold;color:#111">24 255.33</div><div class="a" style="left:1259px;top:430px;width:18px;height:172px;background:#f0f0f0;"></div><div class="a" style="left:1266px;top:569px;width:2px;height:16px;background:#5a5a5a;"></div><div class="a" style="left:15px;top:601px;width:1261px;height:1.5px;background:#5a5a5a;"></div><div class="a" style="left:129px;top:601px;width:101px;height:20px;background:#fff;border:1.5px solid #404040;border-top:none"></div><div class="a" style="left:28px;top:605px;font-size:10.8px;color:#8a8a8a;">Trade</div><div class="a" style="left:75px;top:605px;font-size:10.8px;color:#8a8a8a;">Exposure</div><div class="a" style="left:139px;top:605px;font-size:11.5px;color:#111;">Account History</div><div class="a" style="left:240px;top:605px;font-size:10.8px;color:#8a8a8a;">News</div><div class="a" style="left:286px;top:605px;font-size:10.8px;color:#8a8a8a;">Alerts</div><div class="a" style="left:333px;top:605px;font-size:10.8px;color:#8a8a8a;">Mailbox</div><div class="a" style="left:403px;top:605px;font-size:10.8px;color:#8a8a8a;">Market</div><div class="a" style="left:457px;top:605px;font-size:10.8px;color:#8a8a8a;">Articles</div><div class="a" style="left:524px;top:605px;font-size:10.8px;color:#8a8a8a;">Code Base</div><div class="a" style="left:595px;top:605px;font-size:10.8px;color:#8a8a8a;">Experts</div><div class="a" style="left:649px;top:605px;font-size:10.8px;color:#8a8a8a;">Journal</div><div class="a" style="left:66px;top:605px;width:1px;height:13px;background:#8a8a8a;"></div><div class="a" style="left:277px;top:605px;width:1px;height:13px;background:#8a8a8a;"></div><div class="a" style="left:324px;top:605px;width:1px;height:13px;background:#8a8a8a;"></div><div class="a" style="left:393px;top:605px;width:1px;height:13px;background:#8a8a8a;"></div><div class="a" style="left:447px;top:605px;width:1px;height:13px;background:#8a8a8a;"></div><div class="a" style="left:515px;top:605px;width:1px;height:13px;background:#8a8a8a;"></div><div class="a" style="left:586px;top:605px;width:1px;height:13px;background:#8a8a8a;"></div><div class="a" style="left:641px;top:605px;width:1px;height:13px;background:#8a8a8a;"></div><div class="a" style="left:696px;top:605px;width:1px;height:13px;background:#8a8a8a;"></div><div class="a" style="left:374px;top:610px;font-size:8.5px;color:#e02020;font-weight:bold">14</div><div class="a" style="left:496px;top:610px;font-size:8.5px;color:#e02020;font-weight:bold">45</div><div class="a" style="left:1px;top:624px;width:1279px;height:1px;background:#d8d8d8;"></div><div class="a" style="left:1px;top:625px;width:1279px;height:23px;background:#f0f0f0;"></div><div class="a" style="left:3px;top:633px;font-size:11px;color:#111;letter-spacing:-0.1px">For Help, press F1</div><div class="a" style="left:603px;top:628px;width:1px;height:18px;background:#c8c8c8;"></div><div class="a" style="left:713px;top:628px;width:1px;height:18px;background:#c8c8c8;"></div><div class="a" style="left:810px;top:628px;width:1px;height:18px;background:#c8c8c8;"></div><div class="a" style="left:877px;top:628px;width:1px;height:18px;background:#c8c8c8;"></div><div class="a" style="left:944px;top:628px;width:1px;height:18px;background:#c8c8c8;"></div><div class="a" style="left:1009px;top:628px;width:1px;height:18px;background:#c8c8c8;"></div><div class="a" style="left:1075px;top:628px;width:1px;height:18px;background:#c8c8c8;"></div><div class="a" style="left:1138px;top:628px;width:1px;height:18px;background:#c8c8c8;"></div><div class="a" style="left:609px;top:633px;font-size:11.5px;color:#222;-webkit-text-stroke:0.15px #222;letter-spacing:-0.2px">Default</div><div class="a" style="left:719px;top:633px;font-size:11.5px;color:#222;letter-spacing:-0.45px">2026.01.09 17:25</div><div class="a" style="left:815px;top:633px;font-size:11.5px;color:#222;letter-spacing:-0.45px">O: 4508.65</div><div class="a" style="left:884px;top:633px;font-size:11.5px;color:#222;letter-spacing:-0.45px">H: 4510.72</div><div class="a" style="left:948px;top:633px;font-size:11.5px;color:#222;letter-spacing:-0.45px">L: 4504.26</div><div class="a" style="left:1013px;top:633px;font-size:11.5px;color:#222;letter-spacing:-0.45px">C: 4505.34</div><div class="a" style="left:1080px;top:633px;font-size:11.5px;color:#222;letter-spacing:-0.45px">V: 576</div><div class="a" style="left:1170px;top:633px;font-size:11.5px;color:#222;letter-spacing:-0.45px">112076/1063 kb</div><svg class="a" style="left:1143px;top:631.5px" width="23" height="13" viewBox="0 0 23 13"><rect x="0.0" y="0" width="1.6" height="9.5" fill="#6a9a2a"/><rect x="0.0" y="9.5" width="1.6" height="3.0" fill="#c0302a"/><rect x="2.5" y="0" width="1.6" height="8.6" fill="#6a9a2a"/><rect x="2.5" y="8.6" width="1.6" height="3.9" fill="#c0302a"/><rect x="5.0" y="0" width="1.6" height="7.7" fill="#6a9a2a"/><rect x="5.0" y="7.7" width="1.6" height="4.8" fill="#c0302a"/><rect x="7.5" y="0" width="1.6" height="6.8" fill="#6a9a2a"/><rect x="7.5" y="6.8" width="1.6" height="5.7" fill="#c0302a"/><rect x="10.0" y="0" width="1.6" height="5.9" fill="#6a9a2a"/><rect x="10.0" y="5.9" width="1.6" height="6.6" fill="#c0302a"/><rect x="12.5" y="0" width="1.6" height="5.0" fill="#6a9a2a"/><rect x="12.5" y="5.0" width="1.6" height="7.5" fill="#c0302a"/><rect x="15.0" y="0" width="1.6" height="4.1" fill="#6a9a2a"/><rect x="15.0" y="4.1" width="1.6" height="8.4" fill="#c0302a"/><rect x="17.5" y="0" width="1.6" height="3.2" fill="#6a9a2a"/><rect x="17.5" y="3.2" width="1.6" height="9.3" fill="#c0302a"/><rect x="20.0" y="0" width="1.6" height="2.3" fill="#6a9a2a"/><rect x="20.0" y="2.3" width="1.6" height="10.2" fill="#c0302a"/></svg><svg class="a" style="left:1266px;top:634px" width="13" height="13" viewBox="0 0 13 13"><path d="M12 3 L3 12 M12 6 L6 12 M12 9 L9 12" stroke="#b0b0b0" stroke-width="1.2"/></svg><div class="a" style="left:1279px;top:0px;width:1px;height:648px;background:#a8a8a8;"></div></body></html>
